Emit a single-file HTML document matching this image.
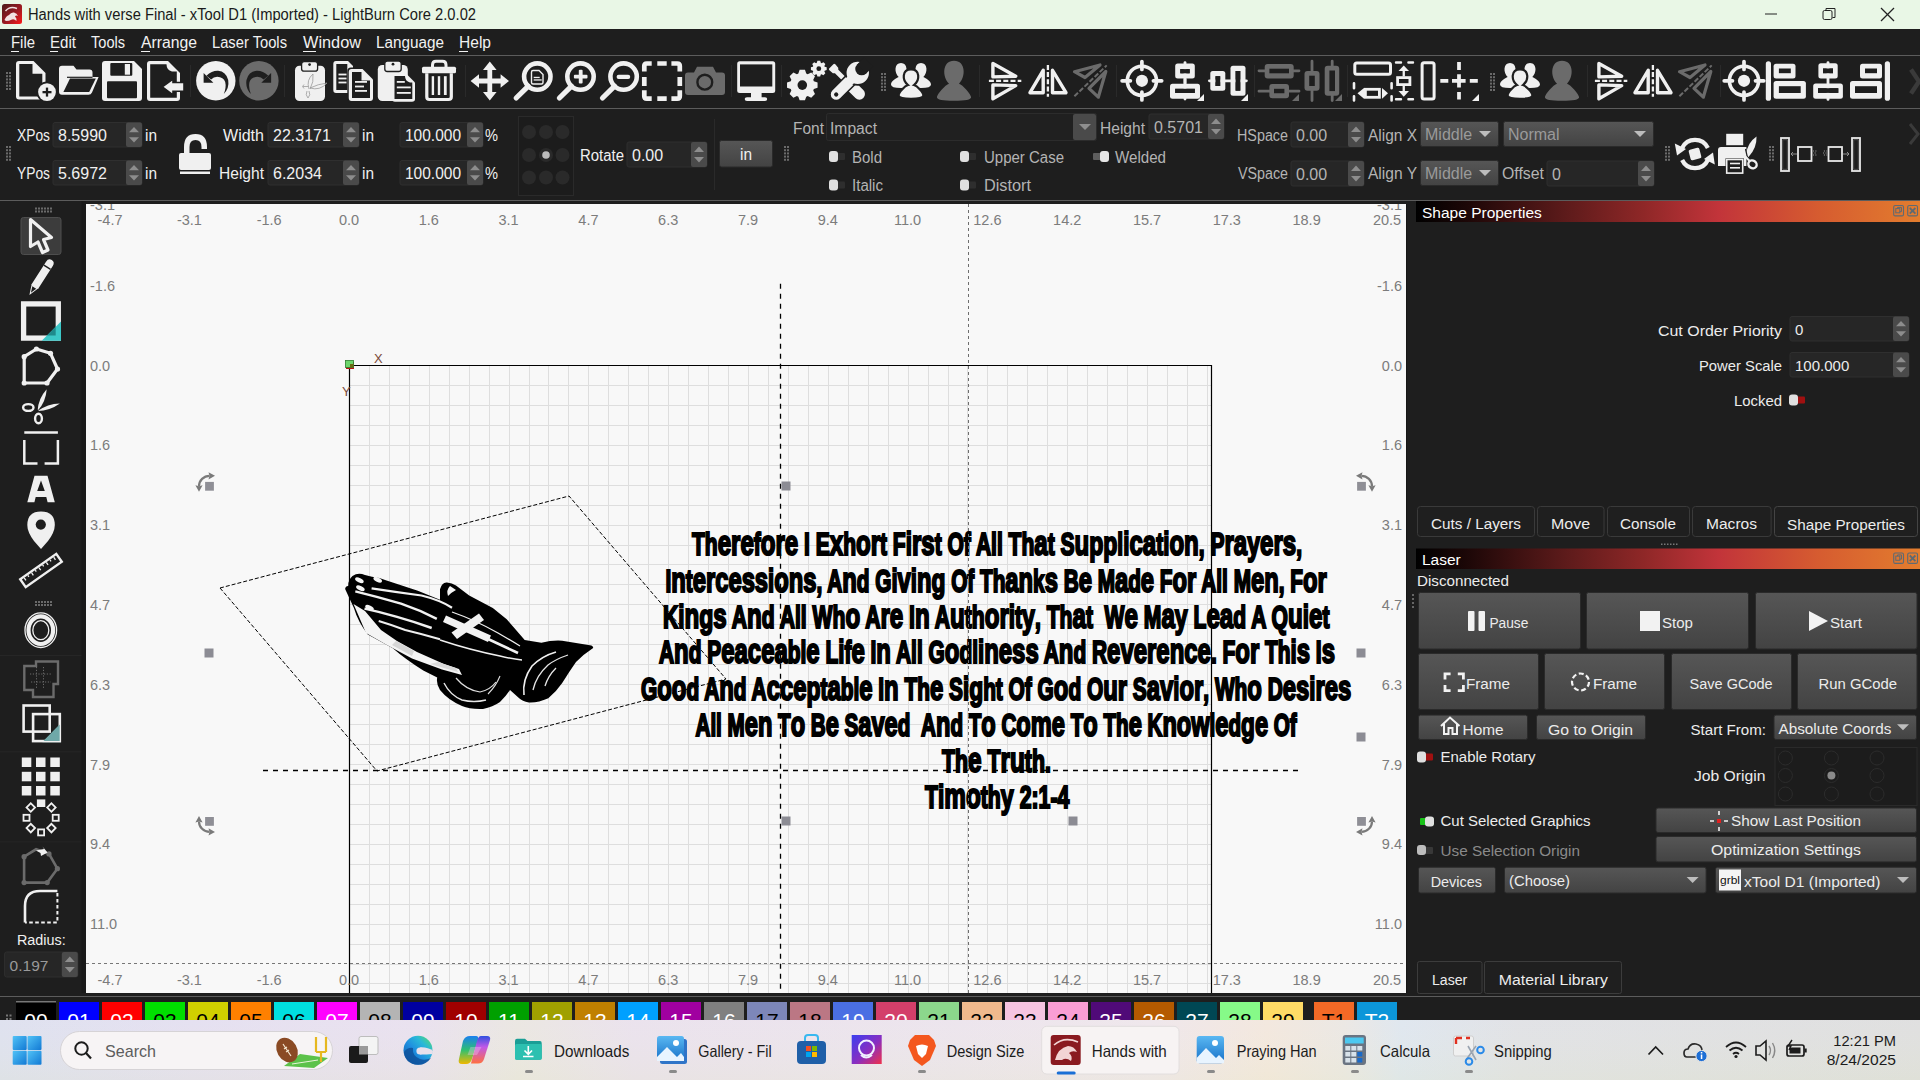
<!DOCTYPE html><html><head><meta charset="utf-8"><title>LightBurn</title><style>html,body{margin:0;padding:0;width:1920px;height:1080px;overflow:hidden;background:#1e1e1e}svg{display:block;font-family:"Liberation Sans",sans-serif}</style></head><body>
<svg width="1920" height="1080" viewBox="0 0 1920 1080">
<defs><linearGradient id="hdr" x1="0" x2="1" y1="0" y2="0"><stop offset="0" stop-color="#000"/><stop offset="0.1" stop-color="#1c0707"/><stop offset="0.3" stop-color="#5e1b1b"/><stop offset="0.45" stop-color="#8e2727"/><stop offset="0.6" stop-color="#c2343a"/><stop offset="0.8" stop-color="#d65c30"/><stop offset="1" stop-color="#e37d2e"/></linearGradient><linearGradient id="btn" x1="0" x2="0" y1="0" y2="1"><stop offset="0" stop-color="#565656"/><stop offset="1" stop-color="#434343"/></linearGradient><linearGradient id="tb" x1="0" x2="1" y1="0" y2="0"><stop offset="0" stop-color="#e3e3ec"/><stop offset="0.25" stop-color="#ebe3ee"/><stop offset="0.45" stop-color="#e9e4ea"/><stop offset="0.6" stop-color="#ede6e8"/><stop offset="0.7" stop-color="#f0e4d8"/><stop offset="0.76" stop-color="#dfe6ee"/><stop offset="1" stop-color="#e1e1e1"/></linearGradient></defs>
<rect x="0" y="0" width="1920" height="1080" fill="#1e1e1e"/>
<rect x="0" y="0" width="1920" height="29" fill="#e9f7e6"/>
<text x="28" y="20" font-size="16" fill="#1a1a1a" textLength="448" lengthAdjust="spacingAndGlyphs">Hands with verse Final - xTool D1 (Imported) - LightBurn Core 2.0.02</text>
<defs><linearGradient id="lbi" x1="0" x2="1" y1="0" y2="1"><stop offset="0" stop-color="#4a1a1a"/><stop offset="0.55" stop-color="#9a1a22"/><stop offset="1" stop-color="#ff1a1a"/></linearGradient></defs>
<rect x="2" y="4" width="20" height="20" fill="url(#lbi)" rx="2.5"/>
<path d="M5.5 11Q10 5.5 17 8.5" fill="none" stroke="#f0e0e0" stroke-width="1.4"/>
<path d="M4.5 20Q6 16 9 15Q11 12 14 12.5Q17 13 18 16Q16 15 15 16.5Q17 18 16.5 21Q14 18.5 12 19.5Q9 21 6 21Z" fill="#f2e2e2"/>
<line x1="1765" y1="14" x2="1777" y2="14" stroke="#222" stroke-width="1"/>
<rect x="1823" y="10.5" width="9" height="9" fill="none" stroke="#222" stroke-width="1" rx="1.5"/>
<path d="M1826 10.5 v-2 h9 v9 h-2.5" fill="none" stroke="#222" stroke-width="1"/>
<line x1="1881" y1="8" x2="1894" y2="21" stroke="#222" stroke-width="1.2"/>
<line x1="1894" y1="8" x2="1881" y2="21" stroke="#222" stroke-width="1.2"/>
<text x="11" y="48" font-size="16" fill="#f2f2f2" textLength="24" lengthAdjust="spacingAndGlyphs">File</text>
<text x="50" y="48" font-size="16" fill="#f2f2f2" textLength="26" lengthAdjust="spacingAndGlyphs">Edit</text>
<text x="91" y="48" font-size="16" fill="#f2f2f2" textLength="34" lengthAdjust="spacingAndGlyphs">Tools</text>
<text x="141" y="48" font-size="16" fill="#f2f2f2" textLength="56" lengthAdjust="spacingAndGlyphs">Arrange</text>
<text x="212" y="48" font-size="16" fill="#f2f2f2" textLength="75" lengthAdjust="spacingAndGlyphs">Laser Tools</text>
<text x="303" y="48" font-size="16" fill="#f2f2f2" textLength="58" lengthAdjust="spacingAndGlyphs">Window</text>
<text x="376" y="48" font-size="16" fill="#f2f2f2" textLength="68" lengthAdjust="spacingAndGlyphs">Language</text>
<text x="459" y="48" font-size="16" fill="#f2f2f2" textLength="32" lengthAdjust="spacingAndGlyphs">Help</text>
<line x1="11" y1="51.5" x2="19" y2="51.5" stroke="#f2f2f2" stroke-width="1"/>
<line x1="50" y1="51.5" x2="58" y2="51.5" stroke="#f2f2f2" stroke-width="1"/>
<line x1="141" y1="51.5" x2="150" y2="51.5" stroke="#f2f2f2" stroke-width="1"/>
<line x1="303" y1="51.5" x2="316" y2="51.5" stroke="#f2f2f2" stroke-width="1"/>
<line x1="459" y1="51.5" x2="468" y2="51.5" stroke="#f2f2f2" stroke-width="1"/>
<line x1="0" y1="55.5" x2="1920" y2="55.5" stroke="#5c5c5c" stroke-width="1"/>
<line x1="0" y1="108.5" x2="1920" y2="108.5" stroke="#5c5c5c" stroke-width="1"/>
<line x1="0" y1="200.5" x2="1920" y2="200.5" stroke="#5c5c5c" stroke-width="1"/>
<rect x="82" y="201" width="4" height="792" fill="#1a1a1a"/>
<rect x="86" y="204" width="1320" height="789" fill="#f8f8f8"/>
<svg x="86" y="204" width="1320" height="789" viewBox="86 204 1320 789" overflow="hidden">
<path d="M369.5 365V993M389.5 365V993M409.5 365V993M429.5 365V993M449.5 365V993M469.5 365V993M489.5 365V993M509.5 365V993M529.5 365V993M548.5 365V993M568.5 365V993M588.5 365V993M608.5 365V993M628.5 365V993M648.5 365V993M668.5 365V993M688.5 365V993M708.5 365V993M728.5 365V993M748.5 365V993M768.5 365V993M788.5 365V993M808.5 365V993M828.5 365V993M848.5 365V993M868.5 365V993M888.5 365V993M908.5 365V993M928.5 365V993M948.5 365V993M967.5 365V993M987.5 365V993M1007.5 365V993M1027.5 365V993M1047.5 365V993M1067.5 365V993M1087.5 365V993M1107.5 365V993M1127.5 365V993M1147.5 365V993M1167.5 365V993M1187.5 365V993M1207.5 365V993M349 385.5H1211M349 405.5H1211M349 425.5H1211M349 445.5H1211M349 465.5H1211M349 485.5H1211M349 505.5H1211M349 525.5H1211M349 545.5H1211M349 564.5H1211M349 584.5H1211M349 604.5H1211M349 624.5H1211M349 644.5H1211M349 664.5H1211M349 684.5H1211M349 704.5H1211M349 724.5H1211M349 744.5H1211M349 764.5H1211M349 784.5H1211M349 804.5H1211M349 824.5H1211M349 844.5H1211M349 864.5H1211M349 884.5H1211M349 904.5H1211M349 924.5H1211M349 944.5H1211M349 964.5H1211M349 983.5H1211" fill="none" stroke="#dedede" stroke-width="1"/>
<path d="M349.5 993V365.5H1211.5V993" fill="none" stroke="#000" stroke-width="1.2"/>
<text x="110" y="225" font-size="14.5" fill="#7c7c7c" text-anchor="middle">-4.7</text>
<text x="110" y="985" font-size="14.5" fill="#7c7c7c" text-anchor="middle">-4.7</text>
<text x="189.4" y="225" font-size="14.5" fill="#7c7c7c" text-anchor="middle">-3.1</text>
<text x="189.4" y="985" font-size="14.5" fill="#7c7c7c" text-anchor="middle">-3.1</text>
<text x="269.2" y="225" font-size="14.5" fill="#7c7c7c" text-anchor="middle">-1.6</text>
<text x="269.2" y="985" font-size="14.5" fill="#7c7c7c" text-anchor="middle">-1.6</text>
<text x="349.0" y="225" font-size="14.5" fill="#7c7c7c" text-anchor="middle">0.0</text>
<text x="349.0" y="985" font-size="14.5" fill="#7c7c7c" text-anchor="middle">0.0</text>
<text x="428.8" y="225" font-size="14.5" fill="#7c7c7c" text-anchor="middle">1.6</text>
<text x="428.8" y="985" font-size="14.5" fill="#7c7c7c" text-anchor="middle">1.6</text>
<text x="508.6" y="225" font-size="14.5" fill="#7c7c7c" text-anchor="middle">3.1</text>
<text x="508.6" y="985" font-size="14.5" fill="#7c7c7c" text-anchor="middle">3.1</text>
<text x="588.4" y="225" font-size="14.5" fill="#7c7c7c" text-anchor="middle">4.7</text>
<text x="588.4" y="985" font-size="14.5" fill="#7c7c7c" text-anchor="middle">4.7</text>
<text x="668.2" y="225" font-size="14.5" fill="#7c7c7c" text-anchor="middle">6.3</text>
<text x="668.2" y="985" font-size="14.5" fill="#7c7c7c" text-anchor="middle">6.3</text>
<text x="748.0" y="225" font-size="14.5" fill="#7c7c7c" text-anchor="middle">7.9</text>
<text x="748.0" y="985" font-size="14.5" fill="#7c7c7c" text-anchor="middle">7.9</text>
<text x="827.8" y="225" font-size="14.5" fill="#7c7c7c" text-anchor="middle">9.4</text>
<text x="827.8" y="985" font-size="14.5" fill="#7c7c7c" text-anchor="middle">9.4</text>
<text x="907.6" y="225" font-size="14.5" fill="#7c7c7c" text-anchor="middle">11.0</text>
<text x="907.6" y="985" font-size="14.5" fill="#7c7c7c" text-anchor="middle">11.0</text>
<text x="987.4" y="225" font-size="14.5" fill="#7c7c7c" text-anchor="middle">12.6</text>
<text x="987.4" y="985" font-size="14.5" fill="#7c7c7c" text-anchor="middle">12.6</text>
<text x="1067.2" y="225" font-size="14.5" fill="#7c7c7c" text-anchor="middle">14.2</text>
<text x="1067.2" y="985" font-size="14.5" fill="#7c7c7c" text-anchor="middle">14.2</text>
<text x="1147.0" y="225" font-size="14.5" fill="#7c7c7c" text-anchor="middle">15.7</text>
<text x="1147.0" y="985" font-size="14.5" fill="#7c7c7c" text-anchor="middle">15.7</text>
<text x="1226.8" y="225" font-size="14.5" fill="#7c7c7c" text-anchor="middle">17.3</text>
<text x="1226.8" y="985" font-size="14.5" fill="#7c7c7c" text-anchor="middle">17.3</text>
<text x="1306.6" y="225" font-size="14.5" fill="#7c7c7c" text-anchor="middle">18.9</text>
<text x="1306.6" y="985" font-size="14.5" fill="#7c7c7c" text-anchor="middle">18.9</text>
<text x="1387" y="225" font-size="14.5" fill="#7c7c7c" text-anchor="middle">20.5</text>
<text x="1387" y="985" font-size="14.5" fill="#7c7c7c" text-anchor="middle">20.5</text>
<text x="90" y="210" font-size="14.5" fill="#7c7c7c">-3.1</text>
<text x="1402" y="210" font-size="14.5" fill="#7c7c7c" text-anchor="end">-3.1</text>
<text x="90" y="290.7" font-size="14.5" fill="#7c7c7c">-1.6</text>
<text x="1402" y="290.7" font-size="14.5" fill="#7c7c7c" text-anchor="end">-1.6</text>
<text x="90" y="370.5" font-size="14.5" fill="#7c7c7c">0.0</text>
<text x="1402" y="370.5" font-size="14.5" fill="#7c7c7c" text-anchor="end">0.0</text>
<text x="90" y="450.3" font-size="14.5" fill="#7c7c7c">1.6</text>
<text x="1402" y="450.3" font-size="14.5" fill="#7c7c7c" text-anchor="end">1.6</text>
<text x="90" y="530.1" font-size="14.5" fill="#7c7c7c">3.1</text>
<text x="1402" y="530.1" font-size="14.5" fill="#7c7c7c" text-anchor="end">3.1</text>
<text x="90" y="609.9" font-size="14.5" fill="#7c7c7c">4.7</text>
<text x="1402" y="609.9" font-size="14.5" fill="#7c7c7c" text-anchor="end">4.7</text>
<text x="90" y="689.7" font-size="14.5" fill="#7c7c7c">6.3</text>
<text x="1402" y="689.7" font-size="14.5" fill="#7c7c7c" text-anchor="end">6.3</text>
<text x="90" y="769.5" font-size="14.5" fill="#7c7c7c">7.9</text>
<text x="1402" y="769.5" font-size="14.5" fill="#7c7c7c" text-anchor="end">7.9</text>
<text x="90" y="849.3" font-size="14.5" fill="#7c7c7c">9.4</text>
<text x="1402" y="849.3" font-size="14.5" fill="#7c7c7c" text-anchor="end">9.4</text>
<text x="90" y="929.1" font-size="14.5" fill="#7c7c7c">11.0</text>
<text x="1402" y="929.1" font-size="14.5" fill="#7c7c7c" text-anchor="end">11.0</text>
<line x1="86" y1="963.5" x2="1406" y2="963.5" stroke="#777" stroke-width="1" stroke-dasharray="3 3"/>
<line x1="780.5" y1="283.8" x2="780.5" y2="993" stroke="#000" stroke-width="1.3" stroke-dasharray="5 5"/>
<line x1="263" y1="770.5" x2="1298" y2="770.5" stroke="#000" stroke-width="1.3" stroke-dasharray="5 5"/>
<rect x="346" y="362" width="8" height="7" fill="#bb1111"/>
<rect x="345.5" y="360.5" width="8" height="7" fill="#6cd66c" stroke="#2e7a2e" stroke-width="0.8"/>
<rect x="350" y="364" width="3.5" height="3.5" fill="#6b6b10"/>
<text x="374" y="363" font-size="13" fill="#7a4a3a">X</text>
<text x="342" y="396" font-size="13" fill="#7a4a3a">Y</text>
<path d="M220 588L569 496L726 679L377 771Z" fill="none" stroke="#000" stroke-width="1" stroke-dasharray="4 2"/>
<g>
<path d="M352.5 576Q358 572 365 575L372 576.8Q380 577.5 385.8 580.3L417.8 590.7L440 599.7L440 589.3Q442 582 447 582.5Q452 583 456 585.5L469.2 595.6L492.8 608L506.7 619.2L524.7 640L541.4 642.8Q552 640 562.2 640.7L591.4 645.6Q594 647 592.8 648.3Q584 654 576 662Q569 672 562.2 683Q556 692 548.3 698.3Q538 703 528.9 702.5Q522 701 519.2 698.3L510 690Q506 696 500 702Q492.8 707 483 709Q470 709.5 462 706Q448 700 440 690Q436 684 437.2 677.5L423.3 670.6Q405 659 392.8 648.3L367.8 634.4Q358 622 353.9 608L345.6 590Q344 587 348.3 585.8Q348 580 352.5 576Z" fill="#000"/>
<path d="M353.5 604L366 633L386 644.5L412 658.5L442 669.5L462 675L459 669L444 664L417 652L397 641L381 630L365 611Z" fill="#f4f4f4"/>
<path d="M392 645L412 656L414 651L396 641Z" fill="#d6d6d6"/>
<path d="M430 664L458 672L456 668L438 662Z" fill="#dadada"/>
<path d="M371.6 588.3Q396 592 421.5 595.5Q440 600 452 607.7" fill="none" stroke="#f2f2f2" stroke-width="2.2"/>
<path d="M355.3 591.4Q378 597 401 603.6Q420 610 436.8 618.9" fill="none" stroke="#f2f2f2" stroke-width="2.4"/>
<path d="M364.5 608.7Q380 612 397 616.9Q415 622 431.7 628" fill="none" stroke="#f0f0f0" stroke-width="2.4"/>
<path d="M378.7 621Q392 625 405.2 630Q422 634 440 639.3" fill="none" stroke="#eeeeee" stroke-width="2"/>
<path d="M452 612Q475 620 498 633Q510 640 520 646" fill="none" stroke="#f0f0f0" stroke-width="1.3"/>
<path d="M440 640Q470 650 500 656Q512 659 522 660" fill="none" stroke="#f0f0f0" stroke-width="1.4"/>
<ellipse cx="359.4" cy="580.2" rx="4.6" ry="2.2" fill="#f4f4f4" transform="rotate(25 359.4 580.2)"/>
<ellipse cx="377.7" cy="579.7" rx="4.6" ry="2.2" fill="#f4f4f4" transform="rotate(25 377.7 579.7)"/>
<ellipse cx="360.4" cy="588.3" rx="4.6" ry="2.2" fill="#f4f4f4" transform="rotate(25 360.4 588.3)"/>
<ellipse cx="369.5" cy="607.7" rx="4.6" ry="2.2" fill="#f4f4f4" transform="rotate(25 369.5 607.7)"/>
<path d="M450 586Q446 590 448 596Q452 592 456 590Z" fill="#f4f4f4"/>
<path d="M446 615.5L491 635.5L488 642L443 622Z" fill="#f2f2f2"/>
<path d="M488 639L518 653" fill="none" stroke="#f2f2f2" stroke-width="2.6"/>
<path d="M451.5 632.5L479 613.5L484 620L457 639Z" fill="#f2f2f2"/>
<path d="M524 695Q522 680 532 666Q542 656 556 652" fill="none" stroke="#f0f0f0" stroke-width="1.6"/>
<path d="M533 690Q536 676 548 665Q556 659 568 655" fill="none" stroke="#e6e6e6" stroke-width="1.3"/>
<path d="M545 686Q548 676 556 668" fill="none" stroke="#e6e6e6" stroke-width="1.3"/>
<path d="M444 683Q450 695 462 700Q474 703 486 700" fill="none" stroke="#e6e6e6" stroke-width="1.4"/>
<path d="M456 678Q466 690 480 692Q490 690 496 682" fill="none" stroke="#dedede" stroke-width="1.2"/>
<path d="M488 694Q496 686 500 676" fill="none" stroke="#e0e0e0" stroke-width="1.1"/>
</g>
<text x="692" y="555.15" font-size="31" font-weight="bold" fill="#000" stroke="#000" stroke-width="2.1" textLength="610" lengthAdjust="spacingAndGlyphs" xml:space="preserve"><tspan font-size="31">Th</tspan><tspan font-size="35.5">ere</tspan><tspan font-size="31">f</tspan><tspan font-size="35.5">ore</tspan><tspan font-size="31"> I E</tspan><tspan font-size="35.5">x</tspan><tspan font-size="31">h</tspan><tspan font-size="35.5">or</tspan><tspan font-size="31">t F</tspan><tspan font-size="33">i</tspan><tspan font-size="35.5">rs</tspan><tspan font-size="31">t Of All Th</tspan><tspan font-size="35.5">a</tspan><tspan font-size="31">t S</tspan><tspan font-size="35.5">u</tspan><tspan font-size="34">pp</tspan><tspan font-size="31">l</tspan><tspan font-size="33">i</tspan><tspan font-size="35.5">ca</tspan><tspan font-size="31">t</tspan><tspan font-size="33">i</tspan><tspan font-size="35.5">on</tspan><tspan font-size="31">, P</tspan><tspan font-size="35.5">ra</tspan><tspan font-size="34">y</tspan><tspan font-size="35.5">ers</tspan><tspan font-size="31">,</tspan></text>
<text x="665.5" y="592.05" font-size="31" font-weight="bold" fill="#000" stroke="#000" stroke-width="2.1" textLength="661.2" lengthAdjust="spacingAndGlyphs" xml:space="preserve"><tspan font-size="31">I</tspan><tspan font-size="35.5">n</tspan><tspan font-size="31">t</tspan><tspan font-size="35.5">ercess</tspan><tspan font-size="33">i</tspan><tspan font-size="35.5">ons</tspan><tspan font-size="31">, A</tspan><tspan font-size="35.5">n</tspan><tspan font-size="31">d G</tspan><tspan font-size="33">i</tspan><tspan font-size="35.5">v</tspan><tspan font-size="33">i</tspan><tspan font-size="35.5">n</tspan><tspan font-size="34">g</tspan><tspan font-size="31"> Of Th</tspan><tspan font-size="35.5">an</tspan><tspan font-size="31">k</tspan><tspan font-size="35.5">s</tspan><tspan font-size="31"> B</tspan><tspan font-size="35.5">e</tspan><tspan font-size="31"> M</tspan><tspan font-size="35.5">a</tspan><tspan font-size="31">d</tspan><tspan font-size="35.5">e</tspan><tspan font-size="31"> F</tspan><tspan font-size="35.5">or</tspan><tspan font-size="31"> All M</tspan><tspan font-size="35.5">en</tspan><tspan font-size="31">, F</tspan><tspan font-size="35.5">or</tspan></text>
<text x="663" y="627.65" font-size="31" font-weight="bold" fill="#000" stroke="#000" stroke-width="2.1" textLength="666.4" lengthAdjust="spacingAndGlyphs" xml:space="preserve"><tspan font-size="31">K</tspan><tspan font-size="33">i</tspan><tspan font-size="35.5">n</tspan><tspan font-size="34">g</tspan><tspan font-size="35.5">s</tspan><tspan font-size="31"> A</tspan><tspan font-size="35.5">n</tspan><tspan font-size="31">d All Wh</tspan><tspan font-size="35.5">o</tspan><tspan font-size="31"> A</tspan><tspan font-size="35.5">re</tspan><tspan font-size="31"> I</tspan><tspan font-size="35.5">n</tspan><tspan font-size="31"> A</tspan><tspan font-size="35.5">u</tspan><tspan font-size="31">th</tspan><tspan font-size="35.5">or</tspan><tspan font-size="33">i</tspan><tspan font-size="31">t</tspan><tspan font-size="34">y</tspan><tspan font-size="31">, Th</tspan><tspan font-size="35.5">a</tspan><tspan font-size="31">t  W</tspan><tspan font-size="35.5">e</tspan><tspan font-size="31"> M</tspan><tspan font-size="35.5">a</tspan><tspan font-size="34">y</tspan><tspan font-size="31"> L</tspan><tspan font-size="35.5">ea</tspan><tspan font-size="31">d A Q</tspan><tspan font-size="35.5">u</tspan><tspan font-size="33">i</tspan><tspan font-size="35.5">e</tspan><tspan font-size="31">t</tspan></text>
<text x="659" y="663.15" font-size="31" font-weight="bold" fill="#000" stroke="#000" stroke-width="2.1" textLength="676" lengthAdjust="spacingAndGlyphs" xml:space="preserve"><tspan font-size="31">A</tspan><tspan font-size="35.5">n</tspan><tspan font-size="31">d P</tspan><tspan font-size="35.5">eacea</tspan><tspan font-size="31">bl</tspan><tspan font-size="35.5">e</tspan><tspan font-size="31"> L</tspan><tspan font-size="33">i</tspan><tspan font-size="31">f</tspan><tspan font-size="35.5">e</tspan><tspan font-size="31"> I</tspan><tspan font-size="35.5">n</tspan><tspan font-size="31"> All G</tspan><tspan font-size="35.5">o</tspan><tspan font-size="31">dl</tspan><tspan font-size="33">i</tspan><tspan font-size="35.5">ness</tspan><tspan font-size="31"> A</tspan><tspan font-size="35.5">n</tspan><tspan font-size="31">d R</tspan><tspan font-size="35.5">everence</tspan><tspan font-size="31">. F</tspan><tspan font-size="35.5">or</tspan><tspan font-size="31"> Th</tspan><tspan font-size="33">i</tspan><tspan font-size="35.5">s</tspan><tspan font-size="31"> I</tspan><tspan font-size="35.5">s</tspan></text>
<text x="641" y="699.85" font-size="31" font-weight="bold" fill="#000" stroke="#000" stroke-width="2.1" textLength="710.4" lengthAdjust="spacingAndGlyphs" xml:space="preserve"><tspan font-size="31">G</tspan><tspan font-size="35.5">oo</tspan><tspan font-size="31">d A</tspan><tspan font-size="35.5">n</tspan><tspan font-size="31">d A</tspan><tspan font-size="35.5">cce</tspan><tspan font-size="34">p</tspan><tspan font-size="31">t</tspan><tspan font-size="35.5">a</tspan><tspan font-size="31">bl</tspan><tspan font-size="35.5">e</tspan><tspan font-size="31"> I</tspan><tspan font-size="35.5">n</tspan><tspan font-size="31"> Th</tspan><tspan font-size="35.5">e</tspan><tspan font-size="31"> S</tspan><tspan font-size="33">i</tspan><tspan font-size="34">g</tspan><tspan font-size="31">ht Of G</tspan><tspan font-size="35.5">o</tspan><tspan font-size="31">d O</tspan><tspan font-size="35.5">ur</tspan><tspan font-size="31"> S</tspan><tspan font-size="35.5">av</tspan><tspan font-size="33">i</tspan><tspan font-size="35.5">or</tspan><tspan font-size="31">, Wh</tspan><tspan font-size="35.5">o</tspan><tspan font-size="31"> D</tspan><tspan font-size="35.5">es</tspan><tspan font-size="33">i</tspan><tspan font-size="35.5">res</tspan></text>
<text x="695.5" y="735.75" font-size="31" font-weight="bold" fill="#000" stroke="#000" stroke-width="2.1" textLength="601.2" lengthAdjust="spacingAndGlyphs" xml:space="preserve"><tspan font-size="31">All M</tspan><tspan font-size="35.5">en</tspan><tspan font-size="31"> T</tspan><tspan font-size="35.5">o</tspan><tspan font-size="31"> B</tspan><tspan font-size="35.5">e</tspan><tspan font-size="31"> S</tspan><tspan font-size="35.5">ave</tspan><tspan font-size="31">d  A</tspan><tspan font-size="35.5">n</tspan><tspan font-size="31">d T</tspan><tspan font-size="35.5">o</tspan><tspan font-size="31"> C</tspan><tspan font-size="35.5">ome</tspan><tspan font-size="31"> T</tspan><tspan font-size="35.5">o</tspan><tspan font-size="31"> Th</tspan><tspan font-size="35.5">e</tspan><tspan font-size="31"> K</tspan><tspan font-size="35.5">now</tspan><tspan font-size="31">l</tspan><tspan font-size="35.5">e</tspan><tspan font-size="31">d</tspan><tspan font-size="34">g</tspan><tspan font-size="35.5">e</tspan><tspan font-size="31"> Of</tspan></text>
<text x="942" y="772.05" font-size="31" font-weight="bold" fill="#000" stroke="#000" stroke-width="2.1" textLength="108.8" lengthAdjust="spacingAndGlyphs" xml:space="preserve"><tspan font-size="31">Th</tspan><tspan font-size="35.5">e</tspan><tspan font-size="31"> T</tspan><tspan font-size="35.5">ru</tspan><tspan font-size="31">th.</tspan></text>
<text x="925" y="808.0" font-size="31" font-weight="bold" fill="#000" stroke="#000" stroke-width="2.1" textLength="144.3" lengthAdjust="spacingAndGlyphs" xml:space="preserve"><tspan font-size="31">T</tspan><tspan font-size="33">i</tspan><tspan font-size="35.5">mo</tspan><tspan font-size="31">th</tspan><tspan font-size="34">y</tspan><tspan font-size="31"> 2:1-4</tspan></text>
<line x1="968.5" y1="204" x2="968.5" y2="993" stroke="#6e6e6e" stroke-width="1" stroke-dasharray="3 3"/>
<rect x="781.5" y="481.5" width="9" height="9" fill="#8c8c94"/>
<rect x="204.5" y="648.5" width="9" height="9" fill="#8c8c94"/>
<rect x="1356.5" y="648.5" width="9" height="9" fill="#8c8c94"/>
<rect x="1356.5" y="732.5" width="9" height="9" fill="#8c8c94"/>
<rect x="781.5" y="816.5" width="9" height="9" fill="#8c8c94"/>
<rect x="1068.5" y="816.5" width="9" height="9" fill="#8c8c94"/>
<rect x="204.5" y="481.3" width="10" height="10" fill="#fafafa"/>
<rect x="205.1" y="481.90000000000003" width="8.8" height="8.8" fill="#8f8f96"/>
<path d="M199.00 486.30A10.5 10.5 0 0 1 209.50 475.80" fill="none" stroke="#7a7a7a" stroke-width="2.2"/>
<path d="M215.00 475.80L208.50 472.20L209.50 475.80L208.50 479.40Z" fill="#7a7a7a"/>
<path d="M199.00 491.80L195.40 485.30L199.00 486.30L202.60 485.30Z" fill="#7a7a7a"/>
<rect x="1356.5" y="481.3" width="10" height="10" fill="#fafafa"/>
<rect x="1357.1" y="481.90000000000003" width="8.8" height="8.8" fill="#8f8f96"/>
<path d="M1361.50 475.80A10.5 10.5 0 0 1 1372.00 486.30" fill="none" stroke="#7a7a7a" stroke-width="2.2"/>
<path d="M1372.00 491.80L1375.60 485.30L1372.00 486.30L1368.40 485.30Z" fill="#7a7a7a"/>
<path d="M1356.00 475.80L1362.50 472.20L1361.50 475.80L1362.50 479.40Z" fill="#7a7a7a"/>
<rect x="204.5" y="816.4" width="10" height="10" fill="#fafafa"/>
<rect x="205.1" y="817.0" width="8.8" height="8.8" fill="#8f8f96"/>
<path d="M209.50 831.90A10.5 10.5 0 0 1 199.00 821.40" fill="none" stroke="#7a7a7a" stroke-width="2.2"/>
<path d="M199.00 815.90L195.40 822.40L199.00 821.40L202.60 822.40Z" fill="#7a7a7a"/>
<path d="M215.00 831.90L208.50 835.50L209.50 831.90L208.50 828.30Z" fill="#7a7a7a"/>
<rect x="1356.5" y="816.4" width="10" height="10" fill="#fafafa"/>
<rect x="1357.1" y="817.0" width="8.8" height="8.8" fill="#8f8f96"/>
<path d="M1372.00 821.40A10.5 10.5 0 0 1 1361.50 831.90" fill="none" stroke="#7a7a7a" stroke-width="2.2"/>
<path d="M1356.00 831.90L1362.50 835.50L1361.50 831.90L1362.50 828.30Z" fill="#7a7a7a"/>
<path d="M1372.00 815.90L1375.60 822.40L1372.00 821.40L1368.40 822.40Z" fill="#7a7a7a"/>
</svg>
<rect x="1416" y="201" width="504" height="21" fill="url(#hdr)"/>
<text x="1422" y="218" font-size="15.5" fill="#ffffff">Shape Properties</text>
<rect x="1893.7" y="205.5" width="9.8" height="10.4" fill="none" stroke="#5e6a72" stroke-width="1.1" rx="1.5"/>
<rect x="1895.8" y="208.6" width="4" height="4.2" fill="none" stroke="#5e6a72" stroke-width="1"/>
<path d="M1897.5 208.6V207.4H1901.5V211.6H1899.8" fill="none" stroke="#5e6a72" stroke-width="1"/>
<rect x="1907.7" y="205.5" width="9.8" height="10.4" fill="none" stroke="#5e6a72" stroke-width="1.1" rx="1.5"/>
<line x1="1909.8" y1="208" x2="1915.4" y2="213.6" stroke="#5e6a72" stroke-width="1.8"/>
<line x1="1915.4" y1="208" x2="1909.8" y2="213.6" stroke="#5e6a72" stroke-width="1.8"/>
<text x="1782" y="335.6" font-size="15.5" fill="#ececec" textLength="124" lengthAdjust="spacingAndGlyphs" text-anchor="end">Cut Order Priority</text>
<rect x="1790" y="316.5" width="119" height="24.5" fill="#262626" stroke="#2f2f2f" stroke-width="1" rx="2"/>
<rect x="1893" y="316.5" width="16" height="24.5" fill="#4a4a4a" rx="2"/>
<path d="M1896.0 326.3L1901.0 320.91L1906.0 326.3Z" fill="#8d8d8d"/>
<path d="M1896.0 331.2L1901.0 336.59L1906.0 331.2Z" fill="#8d8d8d"/>
<text x="1795" y="335.05" font-size="15" fill="#ececec">0</text>
<text x="1782" y="371.4" font-size="15.5" fill="#ececec" textLength="83" lengthAdjust="spacingAndGlyphs" text-anchor="end">Power Scale</text>
<rect x="1790" y="352.5" width="119" height="24.5" fill="#262626" stroke="#2f2f2f" stroke-width="1" rx="2"/>
<rect x="1893" y="352.5" width="16" height="24.5" fill="#4a4a4a" rx="2"/>
<path d="M1896.0 362.3L1901.0 356.91L1906.0 362.3Z" fill="#8d8d8d"/>
<path d="M1896.0 367.2L1901.0 372.59L1906.0 367.2Z" fill="#8d8d8d"/>
<text x="1795" y="371.05" font-size="15" fill="#ececec">100.000</text>
<text x="1782" y="406" font-size="15.5" fill="#ececec" textLength="48" lengthAdjust="spacingAndGlyphs" text-anchor="end">Locked</text>
<rect x="1791" y="396.5" width="14" height="7" fill="#a01010" rx="1"/>
<rect x="1789" y="394.5" width="9" height="11" fill="#e0e0e0" rx="3"/>
<rect x="1417.5" y="506.5" width="117" height="30" fill="#1f1f1f" stroke="#3a3a3a" stroke-width="1" rx="3"/>
<text x="1431" y="529" font-size="15.5" fill="#ececec" textLength="90" lengthAdjust="spacingAndGlyphs">Cuts / Layers</text>
<rect x="1537.5" y="506.5" width="66.5" height="30" fill="#1f1f1f" stroke="#3a3a3a" stroke-width="1" rx="3"/>
<text x="1551" y="529" font-size="15.5" fill="#ececec" textLength="39" lengthAdjust="spacingAndGlyphs">Move</text>
<rect x="1607.5" y="506.5" width="82" height="30" fill="#1f1f1f" stroke="#3a3a3a" stroke-width="1" rx="3"/>
<text x="1620" y="529" font-size="15.5" fill="#ececec" textLength="56" lengthAdjust="spacingAndGlyphs">Console</text>
<rect x="1692.5" y="506.5" width="78.59999999999991" height="30" fill="#1f1f1f" stroke="#3a3a3a" stroke-width="1" rx="3"/>
<text x="1706" y="529" font-size="15.5" fill="#ececec" textLength="51" lengthAdjust="spacingAndGlyphs">Macros</text>
<rect x="1774.5" y="506.5" width="143" height="30" fill="#1f1f1f" stroke="#444" stroke-width="1" rx="3"/>
<text x="1787" y="530" font-size="15.5" fill="#ececec" textLength="118" lengthAdjust="spacingAndGlyphs">Shape Properties</text>
<rect x="1661" y="543.5" width="1.5" height="1.5" fill="#777"/>
<rect x="1664" y="543.5" width="1.5" height="1.5" fill="#777"/>
<rect x="1667" y="543.5" width="1.5" height="1.5" fill="#777"/>
<rect x="1670" y="543.5" width="1.5" height="1.5" fill="#777"/>
<rect x="1673" y="543.5" width="1.5" height="1.5" fill="#777"/>
<rect x="1676" y="543.5" width="1.5" height="1.5" fill="#777"/>
<rect x="1416" y="548.5" width="504" height="20.5" fill="url(#hdr)"/>
<text x="1422" y="565" font-size="15.5" fill="#ffffff">Laser</text>
<rect x="1893.7" y="553.0" width="9.8" height="10.4" fill="none" stroke="#5e6a72" stroke-width="1.1" rx="1.5"/>
<rect x="1895.8" y="556.1" width="4" height="4.2" fill="none" stroke="#5e6a72" stroke-width="1"/>
<path d="M1897.5 556.1V554.9H1901.5V559.1H1899.8" fill="none" stroke="#5e6a72" stroke-width="1"/>
<rect x="1907.7" y="553.0" width="9.8" height="10.4" fill="none" stroke="#5e6a72" stroke-width="1.1" rx="1.5"/>
<line x1="1909.8" y1="555.5" x2="1915.4" y2="561.1" stroke="#5e6a72" stroke-width="1.8"/>
<line x1="1915.4" y1="555.5" x2="1909.8" y2="561.1" stroke="#5e6a72" stroke-width="1.8"/>
<text x="1417" y="586" font-size="15.5" fill="#ececec" textLength="92" lengthAdjust="spacingAndGlyphs">Disconnected</text>
<rect x="1412" y="594" width="2" height="2" fill="#666"/>
<rect x="1412" y="598" width="2" height="2" fill="#666"/>
<rect x="1412" y="602" width="2" height="2" fill="#666"/>
<rect x="1412" y="606" width="2" height="2" fill="#666"/>
<rect x="1418.5" y="592.5" width="162" height="56.5" fill="url(#btn)" stroke="#2a2a2a" stroke-width="1" rx="2"/>
<rect x="1586.5" y="592.5" width="162" height="56.5" fill="url(#btn)" stroke="#2a2a2a" stroke-width="1" rx="2"/>
<rect x="1755.5" y="592.5" width="161.5" height="56.5" fill="url(#btn)" stroke="#2a2a2a" stroke-width="1" rx="2"/>
<rect x="1468" y="611" width="6.5" height="20" fill="#f2f2f2" rx="1"/>
<rect x="1478.5" y="611" width="6.5" height="20" fill="#f2f2f2" rx="1"/>
<text x="1489.4" y="628" font-size="15.5" fill="#ececec" textLength="39" lengthAdjust="spacingAndGlyphs">Pause</text>
<rect x="1640" y="611" width="20" height="20" fill="#f2f2f2"/>
<text x="1662" y="628" font-size="15.5" fill="#ececec" textLength="31" lengthAdjust="spacingAndGlyphs">Stop</text>
<path d="M1809 611L1828 621L1809 631Z" fill="#f2f2f2"/>
<text x="1830" y="628" font-size="15.5" fill="#ececec" textLength="32" lengthAdjust="spacingAndGlyphs">Start</text>
<rect x="1418.5" y="653.5" width="120" height="56" fill="url(#btn)" stroke="#2a2a2a" stroke-width="1" rx="2"/>
<rect x="1544.5" y="653.5" width="120" height="56" fill="url(#btn)" stroke="#2a2a2a" stroke-width="1" rx="2"/>
<rect x="1671.5" y="653.5" width="120" height="56" fill="url(#btn)" stroke="#2a2a2a" stroke-width="1" rx="2"/>
<rect x="1797.5" y="653.5" width="119.5" height="56" fill="url(#btn)" stroke="#2a2a2a" stroke-width="1" rx="2"/>
<path d="M1445 679.5v-5.6h5.6 M1457.8 673.9h5.6v5.6 M1463.4 685v5.6h-5.6 M1450.6 690.6h-5.6v-5.6" fill="none" stroke="#f2f2f2" stroke-width="2.8"/>
<text x="1466" y="689" font-size="15.5" fill="#ececec" textLength="44" lengthAdjust="spacingAndGlyphs">Frame</text>
<circle cx="1580.5" cy="682" r="8.5" fill="none" stroke="#f2f2f2" stroke-width="2.2" stroke-dasharray="5 2.6"/>
<text x="1593" y="689" font-size="15.5" fill="#ececec" textLength="44" lengthAdjust="spacingAndGlyphs">Frame</text>
<text x="1689.6" y="689" font-size="15.5" fill="#ececec" textLength="83" lengthAdjust="spacingAndGlyphs">Save GCode</text>
<text x="1818.6" y="689" font-size="15.5" fill="#ececec" textLength="78.5" lengthAdjust="spacingAndGlyphs">Run GCode</text>
<rect x="1418.5" y="715.1" width="109" height="24.399999999999977" fill="url(#btn)" stroke="#2a2a2a" stroke-width="1" rx="2"/>
<path d="M1441 726L1450 717.5L1459.5 726M1444 724v10h4.5v-6h4v6h4.5v-10" fill="none" stroke="#f2f2f2" stroke-width="2"/>
<text x="1462.6" y="735" font-size="15.5" fill="#ececec" textLength="41" lengthAdjust="spacingAndGlyphs">Home</text>
<rect x="1536.5" y="715.1" width="109" height="24.399999999999977" fill="url(#btn)" stroke="#2a2a2a" stroke-width="1" rx="2"/>
<text x="1548" y="735" font-size="15.5" fill="#ececec" textLength="85" lengthAdjust="spacingAndGlyphs">Go to Origin</text>
<text x="1690.5" y="735" font-size="15.5" fill="#ececec" textLength="75.5" lengthAdjust="spacingAndGlyphs">Start From:</text>
<rect x="1774.0" y="715.1" width="142.5" height="24.399999999999977" fill="url(#btn)" stroke="#2a2a2a" stroke-width="1" rx="2"/>
<text x="1778.5" y="733.5999999999999" font-size="15.5" fill="#ececec" textLength="113" lengthAdjust="spacingAndGlyphs">Absolute Coords</text>
<path d="M1897 724.3L1909 724.3L1903 730.3Z" fill="#bdbdbd"/>
<rect x="1419" y="753.5" width="14" height="7" fill="#a01010" rx="1"/>
<rect x="1417" y="751.5" width="9" height="11" fill="#e0e0e0" rx="3"/>
<text x="1440.5" y="762.3" font-size="15.5" fill="#ececec" textLength="95" lengthAdjust="spacingAndGlyphs">Enable Rotary</text>
<text x="1765.4" y="780.6" font-size="15.5" fill="#ececec" textLength="71.5" lengthAdjust="spacingAndGlyphs" text-anchor="end">Job Origin</text>
<rect x="1775" y="747.5" width="142" height="58" fill="#1c1c1c" stroke="#2a2a2a" stroke-width="1"/>
<circle cx="1785.4" cy="758" r="7" fill="#1c1c1c" stroke="#2c2c2c" stroke-width="1"/>
<circle cx="1785.4" cy="775.5" r="7" fill="#1c1c1c" stroke="#2c2c2c" stroke-width="1"/>
<circle cx="1785.4" cy="794" r="7" fill="#1c1c1c" stroke="#2c2c2c" stroke-width="1"/>
<circle cx="1831.4" cy="758" r="7" fill="#1c1c1c" stroke="#2c2c2c" stroke-width="1"/>
<circle cx="1831.4" cy="775.5" r="7" fill="#1c1c1c" stroke="#2c2c2c" stroke-width="1"/>
<circle cx="1831.4" cy="794" r="7" fill="#1c1c1c" stroke="#2c2c2c" stroke-width="1"/>
<circle cx="1877" cy="758" r="7" fill="#1c1c1c" stroke="#2c2c2c" stroke-width="1"/>
<circle cx="1877" cy="775.5" r="7" fill="#1c1c1c" stroke="#2c2c2c" stroke-width="1"/>
<circle cx="1877" cy="794" r="7" fill="#1c1c1c" stroke="#2c2c2c" stroke-width="1"/>
<circle cx="1831.4" cy="775.5" r="4" fill="#8a8a8a"/>
<rect x="1420" y="818" width="14" height="7" fill="#19c219" rx="1"/>
<rect x="1425" y="816.5" width="9" height="10" fill="#e0e0e0" rx="3"/>
<text x="1440.5" y="826" font-size="15.5" fill="#ececec" textLength="150" lengthAdjust="spacingAndGlyphs">Cut Selected Graphics</text>
<rect x="1656.0" y="808.0" width="260.5" height="24.5" fill="url(#btn)" stroke="#2a2a2a" stroke-width="1" rx="2"/>
<path d="M1719 811v4M1719 827v4M1710 821h4M1724 821h4" fill="none" stroke="#f2f2f2" stroke-width="1.6"/>
<rect x="1717" y="819" width="4" height="4" fill="#e02020"/>
<text x="1731" y="826" font-size="15.5" fill="#ececec" textLength="130" lengthAdjust="spacingAndGlyphs">Show Last Position</text>
<rect x="1419" y="847" width="14" height="7" fill="#383838" rx="1"/>
<rect x="1417" y="845" width="9" height="10" fill="#bdbdbd" rx="3"/>
<text x="1440.5" y="856" font-size="15.5" fill="#8a8a8a" textLength="139.5" lengthAdjust="spacingAndGlyphs">Use Selection Origin</text>
<rect x="1656.0" y="836.5" width="260.5" height="25.399999999999977" fill="url(#btn)" stroke="#2a2a2a" stroke-width="1" rx="2"/>
<text x="1711" y="855" font-size="15.5" fill="#ececec" textLength="150" lengthAdjust="spacingAndGlyphs">Optimization Settings</text>
<rect x="1418.5" y="867.2" width="77" height="25.799999999999955" fill="url(#btn)" stroke="#2a2a2a" stroke-width="1" rx="2"/>
<text x="1430.7" y="887" font-size="15.5" fill="#ececec" textLength="51.3" lengthAdjust="spacingAndGlyphs">Devices</text>
<rect x="1504.5" y="867.2" width="201.5999999999999" height="25.799999999999955" fill="url(#btn)" stroke="#2a2a2a" stroke-width="1" rx="2"/>
<text x="1509" y="886.4" font-size="15.5" fill="#ececec" textLength="61" lengthAdjust="spacingAndGlyphs">(Choose)</text>
<path d="M1686.6 877.1L1698.6 877.1L1692.6 883.1Z" fill="#bdbdbd"/>
<rect x="1715.5" y="867.2" width="201" height="25.799999999999955" fill="url(#btn)" stroke="#2a2a2a" stroke-width="1" rx="2"/>
<text x="1720" y="886.4" font-size="15.5" fill="#ececec"></text>
<path d="M1897 877.1L1909 877.1L1903 883.1Z" fill="#bdbdbd"/>
<rect x="1719" y="869.5" width="22" height="21" fill="#f4f4f4"/>
<text x="1720" y="884" font-size="11" fill="#111" textLength="20" lengthAdjust="spacingAndGlyphs">grbl</text>
<text x="1744" y="887" font-size="15.5" fill="#ececec" textLength="136.4" lengthAdjust="spacingAndGlyphs">xTool D1 (Imported)</text>
<rect x="1417.5" y="961.5" width="64.5" height="32" fill="#1f1f1f" stroke="#3c3c3c" stroke-width="1" rx="2"/>
<text x="1432" y="985" font-size="15.5" fill="#ececec" textLength="35.3" lengthAdjust="spacingAndGlyphs">Laser</text>
<rect x="1484.5" y="961.5" width="137" height="32" fill="#1f1f1f" stroke="#3c3c3c" stroke-width="1" rx="2"/>
<text x="1498.8" y="985" font-size="15.5" fill="#ececec" textLength="109" lengthAdjust="spacingAndGlyphs">Material Library</text>
<line x1="1406.5" y1="204" x2="1406.5" y2="993" stroke="#161616" stroke-width="1"/>
<rect x="6" y="146.0" width="2" height="2" fill="#6a6a6a"/>
<rect x="9" y="146.0" width="2" height="2" fill="#6a6a6a"/>
<rect x="6" y="149.2" width="2" height="2" fill="#6a6a6a"/>
<rect x="9" y="149.2" width="2" height="2" fill="#6a6a6a"/>
<rect x="6" y="152.4" width="2" height="2" fill="#6a6a6a"/>
<rect x="9" y="152.4" width="2" height="2" fill="#6a6a6a"/>
<rect x="6" y="155.6" width="2" height="2" fill="#6a6a6a"/>
<rect x="9" y="155.6" width="2" height="2" fill="#6a6a6a"/>
<rect x="6" y="158.8" width="2" height="2" fill="#6a6a6a"/>
<rect x="9" y="158.8" width="2" height="2" fill="#6a6a6a"/>
<text x="17" y="141" font-size="16" fill="#f0f0f0" textLength="33" lengthAdjust="spacingAndGlyphs">XPos</text>
<rect x="53" y="122.5" width="89" height="24.5" fill="#262626" stroke="#2f2f2f" stroke-width="1" rx="2"/>
<rect x="126" y="122.5" width="16" height="24.5" fill="#4a4a4a" rx="2"/>
<path d="M129.0 132.3L134.0 126.91L139.0 132.3Z" fill="#8d8d8d"/>
<path d="M129.0 137.2L134.0 142.59L139.0 137.2Z" fill="#8d8d8d"/>
<text x="58" y="141.05" font-size="16" fill="#f0f0f0">8.5990</text>
<text x="145" y="141" font-size="16" fill="#f0f0f0" textLength="12" lengthAdjust="spacingAndGlyphs">in</text>
<text x="17" y="179" font-size="16" fill="#f0f0f0" textLength="33" lengthAdjust="spacingAndGlyphs">YPos</text>
<rect x="53" y="160.5" width="89" height="24.5" fill="#262626" stroke="#2f2f2f" stroke-width="1" rx="2"/>
<rect x="126" y="160.5" width="16" height="24.5" fill="#4a4a4a" rx="2"/>
<path d="M129.0 170.3L134.0 164.91L139.0 170.3Z" fill="#8d8d8d"/>
<path d="M129.0 175.2L134.0 180.59L139.0 175.2Z" fill="#8d8d8d"/>
<text x="58" y="179.05" font-size="16" fill="#f0f0f0">5.6972</text>
<text x="145" y="179" font-size="16" fill="#f0f0f0" textLength="12" lengthAdjust="spacingAndGlyphs">in</text>
<path d="M184 156 V147 Q184 134 195.5 134 Q207 134 207 147 V149 H201.5 V147 Q201.5 140 195.5 140 Q189.5 140 189.5 147 V156Z" fill="#f0f0f0"/>
<rect x="179" y="153" width="32" height="17" fill="#f0f0f0" rx="2"/>
<rect x="180" y="171.5" width="30" height="2.5" fill="#f0f0f0"/>
<text x="223" y="141" font-size="16" fill="#f0f0f0" textLength="41" lengthAdjust="spacingAndGlyphs">Width</text>
<rect x="268" y="122.5" width="91" height="24.5" fill="#262626" stroke="#2f2f2f" stroke-width="1" rx="2"/>
<rect x="343" y="122.5" width="16" height="24.5" fill="#4a4a4a" rx="2"/>
<path d="M346.0 132.3L351.0 126.91L356.0 132.3Z" fill="#8d8d8d"/>
<path d="M346.0 137.2L351.0 142.59L356.0 137.2Z" fill="#8d8d8d"/>
<text x="273" y="141.05" font-size="16" fill="#f0f0f0">22.3171</text>
<text x="362" y="141" font-size="16" fill="#f0f0f0" textLength="12" lengthAdjust="spacingAndGlyphs">in</text>
<text x="219" y="179" font-size="16" fill="#f0f0f0" textLength="45" lengthAdjust="spacingAndGlyphs">Height</text>
<rect x="268" y="160.5" width="91" height="24.5" fill="#262626" stroke="#2f2f2f" stroke-width="1" rx="2"/>
<rect x="343" y="160.5" width="16" height="24.5" fill="#4a4a4a" rx="2"/>
<path d="M346.0 170.3L351.0 164.91L356.0 170.3Z" fill="#8d8d8d"/>
<path d="M346.0 175.2L351.0 180.59L356.0 175.2Z" fill="#8d8d8d"/>
<text x="273" y="179.05" font-size="16" fill="#f0f0f0">6.2034</text>
<text x="362" y="179" font-size="16" fill="#f0f0f0" textLength="12" lengthAdjust="spacingAndGlyphs">in</text>
<rect x="400" y="122.5" width="83" height="24.5" fill="#262626" stroke="#2f2f2f" stroke-width="1" rx="2"/>
<rect x="467" y="122.5" width="16" height="24.5" fill="#4a4a4a" rx="2"/>
<path d="M470.0 132.3L475.0 126.91L480.0 132.3Z" fill="#8d8d8d"/>
<path d="M470.0 137.2L475.0 142.59L480.0 137.2Z" fill="#8d8d8d"/>
<text x="405" y="141.05" font-size="16" fill="#f0f0f0"></text>
<text x="405" y="141" font-size="16" fill="#f0f0f0" textLength="56" lengthAdjust="spacingAndGlyphs">100.000</text>
<rect x="400" y="160.5" width="83" height="24.5" fill="#262626" stroke="#2f2f2f" stroke-width="1" rx="2"/>
<rect x="467" y="160.5" width="16" height="24.5" fill="#4a4a4a" rx="2"/>
<path d="M470.0 170.3L475.0 164.91L480.0 170.3Z" fill="#8d8d8d"/>
<path d="M470.0 175.2L475.0 180.59L480.0 175.2Z" fill="#8d8d8d"/>
<text x="405" y="179.05" font-size="16" fill="#f0f0f0"></text>
<text x="405" y="179" font-size="16" fill="#f0f0f0" textLength="56" lengthAdjust="spacingAndGlyphs">100.000</text>
<text x="485" y="141" font-size="16" fill="#f0f0f0" textLength="13" lengthAdjust="spacingAndGlyphs">%</text>
<text x="485" y="179" font-size="16" fill="#f0f0f0" textLength="13" lengthAdjust="spacingAndGlyphs">%</text>
<rect x="518.5" y="116.5" width="55" height="79" fill="#1c1c1c" stroke="#2a2a2a" stroke-width="1"/>
<circle cx="529" cy="132" r="7" fill="#2a2a2a"/>
<circle cx="529" cy="155" r="7" fill="#2a2a2a"/>
<circle cx="529" cy="177.5" r="7" fill="#2a2a2a"/>
<circle cx="546" cy="132" r="7" fill="#2a2a2a"/>
<circle cx="546" cy="155" r="7" fill="#2a2a2a"/>
<circle cx="546" cy="177.5" r="7" fill="#2a2a2a"/>
<circle cx="562.5" cy="132" r="7" fill="#2a2a2a"/>
<circle cx="562.5" cy="155" r="7" fill="#2a2a2a"/>
<circle cx="562.5" cy="177.5" r="7" fill="#2a2a2a"/>
<circle cx="546" cy="155" r="3.8" fill="#bdbdbd"/>
<text x="580" y="161" font-size="16" fill="#f0f0f0" textLength="44" lengthAdjust="spacingAndGlyphs">Rotate</text>
<rect x="627" y="142" width="80" height="25" fill="#262626" stroke="#2f2f2f" stroke-width="1" rx="2"/>
<rect x="691" y="142" width="16" height="25" fill="#4a4a4a" rx="2"/>
<path d="M694.0 152.0L699.0 146.5L704.0 152.0Z" fill="#8d8d8d"/>
<path d="M694.0 157.0L699.0 162.5L704.0 157.0Z" fill="#8d8d8d"/>
<text x="632" y="160.8" font-size="16" fill="#f0f0f0">0.00</text>
<line x1="714.5" y1="119" x2="714.5" y2="190" stroke="#2a2a2a" stroke-width="1"/>
<rect x="719.5" y="140.5" width="53" height="26.5" fill="url(#btn)" stroke="#2a2a2a" stroke-width="1" rx="2"/>
<text x="746" y="160" font-size="16" fill="#f0f0f0" textLength="12" lengthAdjust="spacingAndGlyphs" text-anchor="middle">in</text>
<rect x="784" y="146.0" width="2" height="2" fill="#6a6a6a"/>
<rect x="787" y="146.0" width="2" height="2" fill="#6a6a6a"/>
<rect x="784" y="149.2" width="2" height="2" fill="#6a6a6a"/>
<rect x="787" y="149.2" width="2" height="2" fill="#6a6a6a"/>
<rect x="784" y="152.4" width="2" height="2" fill="#6a6a6a"/>
<rect x="787" y="152.4" width="2" height="2" fill="#6a6a6a"/>
<rect x="784" y="155.6" width="2" height="2" fill="#6a6a6a"/>
<rect x="787" y="155.6" width="2" height="2" fill="#6a6a6a"/>
<rect x="784" y="158.8" width="2" height="2" fill="#6a6a6a"/>
<rect x="787" y="158.8" width="2" height="2" fill="#6a6a6a"/>
<text x="793" y="133.5" font-size="16" fill="#b4b4b4" textLength="31" lengthAdjust="spacingAndGlyphs">Font</text>
<rect x="826.5" y="113.5" width="270" height="27" fill="#202020" stroke="#2c2c2c" stroke-width="1" rx="2"/>
<rect x="1073" y="114" width="23" height="26" fill="#4a4a4a" rx="2"/>
<path d="M1079 124L1091 124L1085 130Z" fill="#8f8f8f"/>
<text x="830" y="133.5" font-size="16" fill="#b4b4b4" textLength="47" lengthAdjust="spacingAndGlyphs">Impact</text>
<rect x="834" y="153" width="11" height="7" fill="#2e2e2e" rx="1"/>
<rect x="829" y="151" width="9" height="11" fill="#e0e0e0" rx="3"/>
<text x="852" y="163" font-size="16" fill="#b4b4b4" textLength="30" lengthAdjust="spacingAndGlyphs">Bold</text>
<rect x="834" y="181.5" width="11" height="7" fill="#2e2e2e" rx="1"/>
<rect x="829" y="179.5" width="9" height="11" fill="#e0e0e0" rx="3"/>
<text x="852" y="191" font-size="16" fill="#b4b4b4" textLength="31" lengthAdjust="spacingAndGlyphs">Italic</text>
<rect x="965" y="153" width="11" height="7" fill="#2e2e2e" rx="1"/>
<rect x="960" y="151" width="9" height="11" fill="#e0e0e0" rx="3"/>
<text x="984" y="163" font-size="16" fill="#b4b4b4" textLength="80" lengthAdjust="spacingAndGlyphs">Upper Case</text>
<rect x="965" y="181.5" width="11" height="7" fill="#2e2e2e" rx="1"/>
<rect x="960" y="179.5" width="9" height="11" fill="#e0e0e0" rx="3"/>
<text x="984" y="191" font-size="16" fill="#b4b4b4" textLength="47" lengthAdjust="spacingAndGlyphs">Distort</text>
<rect x="1093" y="153" width="10" height="7" fill="#5e5e5e" rx="1"/>
<rect x="1100" y="151" width="9" height="11" fill="#e6e6e6" rx="3"/>
<text x="1115" y="163" font-size="16" fill="#b4b4b4" textLength="51" lengthAdjust="spacingAndGlyphs">Welded</text>
<text x="1100" y="133.5" font-size="16" fill="#b4b4b4" textLength="45" lengthAdjust="spacingAndGlyphs">Height</text>
<rect x="1149" y="114" width="75" height="25" fill="#262626" stroke="#2f2f2f" stroke-width="1" rx="2"/>
<rect x="1208" y="114" width="16" height="25" fill="#4a4a4a" rx="2"/>
<path d="M1211.0 124.0L1216.0 118.5L1221.0 124.0Z" fill="#8d8d8d"/>
<path d="M1211.0 129.0L1216.0 134.5L1221.0 129.0Z" fill="#8d8d8d"/>
<text x="1154" y="132.8" font-size="16" fill="#b4b4b4">0.5701</text>
<text x="1237" y="141" font-size="16" fill="#b4b4b4" textLength="51" lengthAdjust="spacingAndGlyphs">HSpace</text>
<rect x="1291" y="122" width="73" height="25" fill="#262626" stroke="#2f2f2f" stroke-width="1" rx="2"/>
<rect x="1348" y="122" width="16" height="25" fill="#4a4a4a" rx="2"/>
<path d="M1351.0 132.0L1356.0 126.5L1361.0 132.0Z" fill="#8d8d8d"/>
<path d="M1351.0 137.0L1356.0 142.5L1361.0 137.0Z" fill="#8d8d8d"/>
<text x="1296" y="140.8" font-size="16" fill="#b4b4b4">0.00</text>
<text x="1368" y="141" font-size="16" fill="#b4b4b4" textLength="49" lengthAdjust="spacingAndGlyphs">Align X</text>
<rect x="1420.5" y="121.5" width="78" height="25" fill="url(#btn)" stroke="#2a2a2a" stroke-width="1" rx="2"/>
<text x="1425" y="140.3" font-size="16" fill="#9a9a9a">Middle</text>
<path d="M1479 131.0L1491 131.0L1485 137.0Z" fill="#bdbdbd"/>
<text x="1238" y="179" font-size="16" fill="#b4b4b4" textLength="50" lengthAdjust="spacingAndGlyphs">VSpace</text>
<rect x="1291" y="161" width="73" height="25" fill="#262626" stroke="#2f2f2f" stroke-width="1" rx="2"/>
<rect x="1348" y="161" width="16" height="25" fill="#4a4a4a" rx="2"/>
<path d="M1351.0 171.0L1356.0 165.5L1361.0 171.0Z" fill="#8d8d8d"/>
<path d="M1351.0 176.0L1356.0 181.5L1361.0 176.0Z" fill="#8d8d8d"/>
<text x="1296" y="179.8" font-size="16" fill="#b4b4b4">0.00</text>
<text x="1368" y="179" font-size="16" fill="#b4b4b4" textLength="49" lengthAdjust="spacingAndGlyphs">Align Y</text>
<rect x="1420.5" y="160.5" width="78" height="25" fill="url(#btn)" stroke="#2a2a2a" stroke-width="1" rx="2"/>
<text x="1425" y="179.3" font-size="16" fill="#9a9a9a">Middle</text>
<path d="M1479 170.0L1491 170.0L1485 176.0Z" fill="#bdbdbd"/>
<rect x="1503.5" y="121.5" width="150" height="25" fill="url(#btn)" stroke="#2a2a2a" stroke-width="1" rx="2"/>
<text x="1508" y="140.3" font-size="16" fill="#9a9a9a">Normal</text>
<path d="M1634 131.0L1646 131.0L1640 137.0Z" fill="#bdbdbd"/>
<text x="1502" y="179" font-size="16" fill="#b4b4b4" textLength="42" lengthAdjust="spacingAndGlyphs">Offset</text>
<rect x="1547" y="161" width="107" height="25" fill="#262626" stroke="#2f2f2f" stroke-width="1" rx="2"/>
<rect x="1638" y="161" width="16" height="25" fill="#4a4a4a" rx="2"/>
<path d="M1641.0 171.0L1646.0 165.5L1651.0 171.0Z" fill="#8d8d8d"/>
<path d="M1641.0 176.0L1646.0 181.5L1651.0 176.0Z" fill="#8d8d8d"/>
<text x="1552" y="179.8" font-size="16" fill="#b4b4b4">0</text>
<rect x="1665" y="146.0" width="2" height="2" fill="#6a6a6a"/>
<rect x="1668" y="146.0" width="2" height="2" fill="#6a6a6a"/>
<rect x="1665" y="149.2" width="2" height="2" fill="#6a6a6a"/>
<rect x="1668" y="149.2" width="2" height="2" fill="#6a6a6a"/>
<rect x="1665" y="152.4" width="2" height="2" fill="#6a6a6a"/>
<rect x="1668" y="152.4" width="2" height="2" fill="#6a6a6a"/>
<rect x="1665" y="155.6" width="2" height="2" fill="#6a6a6a"/>
<rect x="1668" y="155.6" width="2" height="2" fill="#6a6a6a"/>
<rect x="1665" y="158.8" width="2" height="2" fill="#6a6a6a"/>
<rect x="1668" y="158.8" width="2" height="2" fill="#6a6a6a"/>
<path d="M1682.13 148.00A14.2 14.2 0 0 1 1707.87 148.00" fill="none" stroke="#f0f0f0" stroke-width="4.2"/>
<path d="M1674.8 143.5L1686 149L1677 155.5Z" fill="#f0f0f0"/>
<path d="M1707.87 160.00A14.2 14.2 0 0 1 1682.13 160.00" fill="none" stroke="#f0f0f0" stroke-width="4.2"/>
<path d="M1714.8 164.5L1704 159L1713 152.5Z" fill="#f0f0f0"/>
<rect x="1689.5" y="148.5" width="11" height="11" rx="1.8" fill="#f0f0f0" transform="rotate(-15 1695 154)"/>
<rect x="1726.2" y="133.8" width="17" height="11.4" fill="#f0f0f0"/>
<path d="M1721 146.9H1746.4V166H1718V150Q1718 146.9 1721 146.9Z" fill="#f0f0f0"/>
<rect x="1725.5" y="158.3" width="18.4" height="16" fill="#1e1e1e"/>
<rect x="1726.7" y="159.5" width="16" height="13.6" fill="none" stroke="#f0f0f0" stroke-width="1.6"/>
<line x1="1730" y1="163.5" x2="1740" y2="163.5" stroke="#f0f0f0" stroke-width="1.6"/>
<line x1="1730" y1="167.8" x2="1740" y2="167.8" stroke="#f0f0f0" stroke-width="1.6"/>
<path d="M1746 155Q1747 143 1756.5 136.5Q1757 148 1748.5 157Z" fill="#f0f0f0"/>
<path d="M1745.5 149L1748 160" fill="none" stroke="#1e1e1e" stroke-width="1.2"/>
<ellipse cx="1752.5" cy="164.4" rx="4.3" ry="3.8" fill="none" stroke="#f0f0f0" stroke-width="2.4" transform="rotate(35 1752.5 164.4)"/>
<path d="M1745 156L1749.5 161" fill="none" stroke="#f0f0f0" stroke-width="2"/>
<rect x="1769" y="146.0" width="2" height="2" fill="#6a6a6a"/>
<rect x="1772" y="146.0" width="2" height="2" fill="#6a6a6a"/>
<rect x="1769" y="149.2" width="2" height="2" fill="#6a6a6a"/>
<rect x="1772" y="149.2" width="2" height="2" fill="#6a6a6a"/>
<rect x="1769" y="152.4" width="2" height="2" fill="#6a6a6a"/>
<rect x="1772" y="152.4" width="2" height="2" fill="#6a6a6a"/>
<rect x="1769" y="155.6" width="2" height="2" fill="#6a6a6a"/>
<rect x="1772" y="155.6" width="2" height="2" fill="#6a6a6a"/>
<rect x="1769" y="158.8" width="2" height="2" fill="#6a6a6a"/>
<rect x="1772" y="158.8" width="2" height="2" fill="#6a6a6a"/>
<rect x="1781" y="138" width="8" height="33" fill="none" stroke="#e8e8e8" stroke-width="1.8"/>
<rect x="1782.8" y="139.8" width="4.4" height="29.4" fill="none" stroke="#707070" stroke-width="0.6"/>
<rect x="1852" y="138" width="8" height="33" fill="none" stroke="#e8e8e8" stroke-width="1.8"/>
<rect x="1853.8" y="139.8" width="4.4" height="29.4" fill="none" stroke="#707070" stroke-width="0.6"/>
<rect x="1798" y="147" width="13.5" height="14" fill="none" stroke="#e8e8e8" stroke-width="1.8"/>
<rect x="1828.5" y="147" width="13.5" height="14" fill="none" stroke="#e8e8e8" stroke-width="1.8"/>
<path d="M1791 154H1797M1793 152L1791 154L1793 156M1843 154H1849M1847 152L1849 154L1847 156" fill="none" stroke="#9a9a9a" stroke-width="0.9"/>
<path d="M1813 150q1.5 1 0 2q-1.5 1 0 2q1.5 1 0 2M1815.5 150q1.5 1 0 2q-1.5 1 0 2q1.5 1 0 2M1824 150q1.5 1 0 2q-1.5 1 0 2q1.5 1 0 2M1826.5 150q1.5 1 0 2q-1.5 1 0 2q1.5 1 0 2" fill="none" stroke="#808080" stroke-width="0.7"/>
<path d="M1910 124L1918 134L1910 144" fill="none" stroke="#3a3a3a" stroke-width="3"/>
<rect x="6" y="72.0" width="2" height="2" fill="#6a6a6a"/>
<rect x="9" y="72.0" width="2" height="2" fill="#6a6a6a"/>
<rect x="6" y="75.2" width="2" height="2" fill="#6a6a6a"/>
<rect x="9" y="75.2" width="2" height="2" fill="#6a6a6a"/>
<rect x="6" y="78.4" width="2" height="2" fill="#6a6a6a"/>
<rect x="9" y="78.4" width="2" height="2" fill="#6a6a6a"/>
<rect x="6" y="81.6" width="2" height="2" fill="#6a6a6a"/>
<rect x="9" y="81.6" width="2" height="2" fill="#6a6a6a"/>
<rect x="6" y="84.8" width="2" height="2" fill="#6a6a6a"/>
<rect x="9" y="84.8" width="2" height="2" fill="#6a6a6a"/>
<rect x="6" y="88.0" width="2" height="2" fill="#6a6a6a"/>
<rect x="9" y="88.0" width="2" height="2" fill="#6a6a6a"/>
<path d="M19 61H33.5L45.5 73V99.5H19Q16 99.5 16 96.5V64Q16 61 19 61Z" fill="#f0f0f0"/>
<path d="M19.3 64H32.5V73.8H42.3V96.5H19.3Z" fill="#1e1e1e"/>
<circle cx="47" cy="92.1" r="10.6" fill="#1e1e1e"/><circle cx="47" cy="92.1" r="8.9" fill="#f0f0f0"/>
<rect x="42.5" y="91" width="9" height="2.3" fill="#1e1e1e"/>
<rect x="45.85" y="87.6" width="2.3" height="9" fill="#1e1e1e"/>
<path d="M59 68.8Q59 65.8 62 65.8H73.5L76.5 69.6H89.5Q92.5 69.6 92.5 72.6V77.1H98.6L92 92.5Q91 94.8 88.5 94.8H62Q59 94.8 59 91.8Z" fill="#f0f0f0"/>
<path d="M70 78.5H95.8L89.2 92.1H63.4Z" fill="#1e1e1e"/>
<path d="M67 77.3H92.5" fill="none" stroke="#1e1e1e" stroke-width="1.2"/>
<path d="M105 61H134L142 69V98Q142 101 139 101H105Q102 101 102 98V64Q102 61 105 61Z" fill="#f0f0f0"/>
<rect x="110.3" y="63" width="22" height="12.7" fill="#1e1e1e" rx="1"/>
<rect x="124.8" y="64" width="5.2" height="10.7" fill="#f0f0f0"/>
<rect x="107" y="81.3" width="30" height="17" fill="#1e1e1e" rx="1"/>
<path d="M150 61H168L180 73V98Q180 101 177 101H150Q147 101 147 98V64Q147 61 150 61Z" fill="#f0f0f0"/>
<path d="M150.2 64.2H166.5Q166.5 70 172 71.5H176.8V97.8H150.2Z" fill="#1e1e1e"/>
<path d="M162.3 86.9L173 79V82.5H184V91.3H173V94.8Z" fill="#f0f0f0" stroke="#1e1e1e" stroke-width="1.6"/>
<line x1="190.5" y1="65" x2="190.5" y2="97" stroke="#2a2a2a" stroke-width="1"/>
<g transform="translate(215.8,0) scale(1,1) translate(-215.8,0)">
<circle cx="215.8" cy="80.8" r="19.7" fill="#f0f0f0"/>
<path d="M206.4 75.7Q212 70.5 218.1 70.8Q226 71.5 228.2 80Q229.5 88 223.8 94Q226.5 87 225.2 82Q223.5 77 217.2 76.8Q213.5 76.8 211.1 79.4Z" fill="#1e1e1e"/>
<path d="M203.6 72.9V82.7H213.4Z" fill="#1e1e1e"/>
</g>
<g transform="translate(258.9,0) scale(-1,1) translate(-215.8,0)">
<circle cx="215.8" cy="80.8" r="19.7" fill="#6b6b6b"/>
<path d="M206.4 75.7Q212 70.5 218.1 70.8Q226 71.5 228.2 80Q229.5 88 223.8 94Q226.5 87 225.2 82Q223.5 77 217.2 76.8Q213.5 76.8 211.1 79.4Z" fill="#1e1e1e"/>
<path d="M203.6 72.9V82.7H213.4Z" fill="#1e1e1e"/>
</g>
<line x1="284.5" y1="65" x2="284.5" y2="97" stroke="#2a2a2a" stroke-width="1"/>
<rect x="295" y="65.8" width="30" height="35.2" fill="#f0f0f0" rx="4.5"/>
<rect x="301.6" y="61.6" width="16" height="9.6" fill="#f0f0f0" stroke="#1e1e1e" stroke-width="1.3" rx="2.5"/>
<circle cx="309.6" cy="64.6" r="1.4" fill="#1e1e1e"/>
<path d="M309 89Q306 80 313 74Q314 82 310 89M310 88Q318 84 327 83Q320 91 310 88M303 86.5h5M304 84.5q-3 2 0 4M307 91q-2 4 1 7q3 -3 1 -7" fill="none" stroke="#9a9a9a" stroke-width="0.8"/>
<path d="M336 61H348L353 66V93H336Q333.3 93 333.3 90V64Q333.3 61 336 61Z" fill="#f0f0f0"/>
<rect x="336.3" y="64" width="11" height="26" fill="#1e1e1e"/>
<rect x="338.5" y="73.6" width="8" height="1.8" fill="#f0f0f0"/>
<rect x="338.5" y="77.6" width="8" height="1.8" fill="#f0f0f0"/>
<rect x="338.5" y="81.6" width="8" height="1.8" fill="#f0f0f0"/>
<path d="M351 67.5H363.5L374.5 78.5V99Q374.5 102.5 371 102.5H351Q347.3 102.5 347.3 99V71Q347.3 67.5 351 67.5Z" fill="#1e1e1e"/>
<path d="M351.5 69H362.5L373 79.5V98Q373 101 370 101H351.5Q348.75 101 348.75 98V72Q348.75 69 351.5 69Z" fill="#f0f0f0"/>
<path d="M352 72H361.5V80.5H370V98H352Z" fill="#1e1e1e"/>
<rect x="355" y="81" width="12" height="1.8" fill="#f0f0f0"/>
<rect x="355" y="85.6" width="9" height="1.8" fill="#f0f0f0"/>
<rect x="355" y="90" width="12" height="1.8" fill="#f0f0f0"/>
<rect x="377.8" y="65" width="30" height="36" fill="#f0f0f0" rx="4.5"/>
<rect x="384.8" y="61" width="16.4" height="10.5" fill="#f0f0f0" stroke="#1e1e1e" stroke-width="1.3" rx="2.5"/>
<circle cx="393" cy="64.2" r="1.4" fill="#1e1e1e"/>
<path d="M395 73.5H406L415 82.5V99Q415 101.8 412 101.8H395Q391.8 101.8 391.8 99V76.5Q391.8 73.5 395 73.5Z" fill="#f0f0f0"/>
<path d="M394.5 76H405Q405 81 410 82.5H412.3V99H394.5Z" fill="#1e1e1e"/>
<rect x="396.8" y="81" width="8" height="1.8" fill="#f0f0f0"/>
<rect x="396.8" y="86.5" width="14" height="1.8" fill="#f0f0f0"/>
<rect x="396.8" y="92" width="14" height="1.8" fill="#f0f0f0"/>
<path d="M432.5 67V65Q432.5 61.3 436 61.3H442.5Q446 61.3 446 65V67" fill="none" stroke="#f0f0f0" stroke-width="3"/>
<rect x="422" y="66.8" width="34" height="6.5" fill="#f0f0f0" rx="1.5"/>
<path d="M426.8 73.3V97Q426.8 99.5 429.5 99.5H448.5Q451.3 99.5 451.3 97V73.3" fill="none" stroke="#f0f0f0" stroke-width="3.2"/>
<rect x="431.7" y="76.2" width="2.4" height="18.8" fill="#f0f0f0"/>
<rect x="437.8" y="76.2" width="2.4" height="18.8" fill="#f0f0f0"/>
<rect x="443.9" y="76.2" width="2.8" height="18.8" fill="#f0f0f0"/>
<line x1="465.5" y1="65" x2="465.5" y2="97" stroke="#2a2a2a" stroke-width="1"/>
<path d="M489.8 61.6L496.6 70H492.2V78.6H500.6V74.2L509 81L500.6 87.8V83.4H492.2V92H496.6L489.8 100.4L483 92H487.4V83.4H479V87.8L470.6 81L479 74.2V78.6H487.4V70H483Z" fill="#f0f0f0"/>
<circle cx="537.3" cy="76.6" r="13.2" fill="none" stroke="#f0f0f0" stroke-width="4.6"/>
<line x1="516.1999999999999" y1="98" x2="528.3" y2="86.2" stroke="#f0f0f0" stroke-width="5.2" stroke-linecap="round"/>
<path d="M533 70.5H539L543 74.5V82.5Q543 84 541.5 84H533Q531.5 84 531.5 82.5V72Q531.5 70.5 533 70.5Z" fill="none" stroke="#f0f0f0" stroke-width="1.4"/>
<rect x="533.7" y="76.8" width="6" height="1.3" fill="#f0f0f0"/>
<rect x="533.7" y="79.3" width="8" height="1.3" fill="#f0f0f0"/>
<circle cx="580.5" cy="76.6" r="13.2" fill="none" stroke="#f0f0f0" stroke-width="4.6"/>
<line x1="559.4" y1="98" x2="571.5" y2="86.2" stroke="#f0f0f0" stroke-width="5.2" stroke-linecap="round"/>
<rect x="573.9" y="74.7" width="13.6" height="3.8" fill="#f0f0f0" rx="1"/>
<rect x="578.8" y="69.8" width="3.8" height="13.6" fill="#f0f0f0" rx="1"/>
<circle cx="623.6" cy="76.6" r="13.2" fill="none" stroke="#f0f0f0" stroke-width="4.6"/>
<line x1="602.5" y1="98" x2="614.6" y2="86.2" stroke="#f0f0f0" stroke-width="5.2" stroke-linecap="round"/>
<rect x="616.6" y="74.75" width="13.6" height="4.2" fill="#f0f0f0" rx="2"/>
<path d="M644.3 71.5V66Q644.3 63.5 646.8 63.5H651.7 M657.3 63.5H666.7 M671.4 63.5H677.2Q679.8 63.5 679.8 66V71.5 M679.8 77V86 M679.8 90.2V96Q679.8 98.6 677.2 98.6H671.4 M666.7 98.6H657.3 M651.7 98.6H646.8Q644.3 98.6 644.3 96V90.2 M644.3 86V77" fill="none" stroke="#f0f0f0" stroke-width="4.7"/>
<path d="M688 72.4H694L697 66.8H713L716 72.4H722Q725 72.4 725 75.4V92Q725 95 722 95H688Q685 95 685 92V75.4Q685 72.4 688 72.4Z" fill="#6b6b6b"/>
<circle cx="704.8" cy="82.2" r="7.4" fill="none" stroke="#1e1e1e" stroke-width="2.4"/>
<line x1="731.5" y1="65" x2="731.5" y2="97" stroke="#2a2a2a" stroke-width="1"/>
<rect x="737.2" y="61.2" width="38" height="31.8" fill="#f0f0f0" rx="2.5"/>
<rect x="740" y="64.4" width="32.3" height="22.1" fill="#1e1e1e"/>
<path d="M751 93H761.6V97.3H765Q767.2 97.3 767.2 99.1Q767.2 101 765 101H747Q744.7 101 744.7 99.1Q744.7 97.3 747 97.3H751Z" fill="#f0f0f0"/>
<line x1="781.5" y1="65" x2="781.5" y2="97" stroke="#2a2a2a" stroke-width="1"/>
<path d="M813.84 81.15L817.57 82.44L817.57 87.76L813.84 89.05L813.26 90.47L814.98 94.01L811.21 97.78L807.67 96.06L806.25 96.64L804.96 100.37L799.64 100.37L798.35 96.64L796.93 96.06L793.39 97.78L789.62 94.01L791.34 90.47L790.76 89.05L787.03 87.76L787.03 82.44L790.76 81.15L791.34 79.73L789.62 76.19L793.39 72.42L796.93 74.14L798.35 73.56L799.64 69.83L804.96 69.83L806.25 73.56L807.67 74.14L811.21 72.42L814.98 76.19L813.26 79.73Z" fill="#f0f0f0"/>
<circle cx="802.3" cy="85.1" r="4.8" fill="#1e1e1e"/>
<path d="M824.67 66.69L826.68 67.32L826.68 70.08L824.67 70.71L824.37 71.43L825.35 73.30L823.40 75.25L821.53 74.27L820.81 74.57L820.18 76.58L817.42 76.58L816.79 74.57L816.07 74.27L814.20 75.25L812.25 73.30L813.23 71.43L812.93 70.71L810.92 70.08L810.92 67.32L812.93 66.69L813.23 65.97L812.25 64.10L814.20 62.15L816.07 63.13L816.79 62.83L817.42 60.82L820.18 60.82L820.81 62.83L821.53 63.13L823.40 62.15L825.35 64.10L824.37 65.97Z" fill="#f0f0f0"/>
<circle cx="818.8" cy="68.7" r="2.4" fill="#1e1e1e"/>
<g transform="translate(832,67) rotate(44.7)">
<path d="M-1 -3Q-1 -4 0.5 -4.2L5 -3.8L6.5 -2.4H27V2.4H6.5L5 3.8L0.5 4.2Q-1 4 -1 3Z" fill="#f0f0f0"/>
<path d="M25 -5.6H38.5A5.6 5.6 0 0 1 38.5 5.6H25Q22.5 5.6 22.5 3V-3Q22.5 -5.6 25 -5.6Z" fill="#f0f0f0"/>
</g>
<g transform="translate(836.2,94.4) rotate(-45)">
<path d="M0 -6.2H22L22 6.2H0A6.2 6.2 0 0 1 0 -6.2Z" fill="#f0f0f0" stroke="#1e1e1e" stroke-width="1.6"/>
<circle cx="30.5" cy="0" r="12" fill="#f0f0f0" stroke="#1e1e1e" stroke-width="1.6"/>
<rect x="-0.5" y="-4.6" width="24" height="9.2" fill="#f0f0f0"/>
<circle cx="36" cy="0" r="6.4" fill="#1e1e1e"/>
<rect x="36" y="-6.4" width="10" height="12.8" fill="#1e1e1e"/>
<circle cx="0" cy="0" r="2.1" fill="#1e1e1e"/>
</g>
<rect x="881" y="73.0" width="2" height="2" fill="#6a6a6a"/>
<rect x="884" y="73.0" width="2" height="2" fill="#6a6a6a"/>
<rect x="881" y="76.2" width="2" height="2" fill="#6a6a6a"/>
<rect x="884" y="76.2" width="2" height="2" fill="#6a6a6a"/>
<rect x="881" y="79.4" width="2" height="2" fill="#6a6a6a"/>
<rect x="884" y="79.4" width="2" height="2" fill="#6a6a6a"/>
<rect x="881" y="82.6" width="2" height="2" fill="#6a6a6a"/>
<rect x="884" y="82.6" width="2" height="2" fill="#6a6a6a"/>
<rect x="881" y="85.8" width="2" height="2" fill="#6a6a6a"/>
<rect x="884" y="85.8" width="2" height="2" fill="#6a6a6a"/>
<rect x="881" y="89.0" width="2" height="2" fill="#6a6a6a"/>
<rect x="884" y="89.0" width="2" height="2" fill="#6a6a6a"/>
<g transform="translate(0,0)">
<path d="M898.7 77C894.11 72.8 894.11 63 901 63C907.89 63 907.89 72.8 903.3 77C906.0 78 911 81.4 911 84.4Q911 87.9 901 87.9Q891 87.9 891 84.4C891 81.4 896.0 78 898.7 77Z" fill="#f0f0f0"/>
<path d="M918.7 77C914.11 72.8 914.11 63 921 63C927.89 63 927.89 72.8 923.3 77C926.0 78 931 81.4 931 84.4Q931 87.9 921 87.9Q911 87.9 911 84.4C911 81.4 916.0 78 918.7 77Z" fill="#f0f0f0"/>
<path d="M908 85C901.9 80.32000000000001 901.9 69.4 911 69.4C920.1 69.4 920.1 80.32000000000001 914 85C917.2 86 923.4 92.3 923.4 95.3Q923.4 98.8 911 98.8Q898.6 98.8 898.6 95.3C898.6 92.3 904.8 86 908 85Z" fill="#f0f0f0" stroke="#1e1e1e" stroke-width="2.2"/>
</g>
<g transform="translate(0,0)">
<path d="M949 83.7C942.04 76.8 942.04 60.7 954 60.7C965.96 60.7 965.96 76.8 959 83.7C962.55 84.7 971.1 94.3 971.1 97.3Q971.1 100.8 954 100.8Q936.9 100.8 936.9 97.3C936.9 94.3 945.45 84.7 949 83.7Z" fill="#6b6b6b"/>
</g>
<line x1="979.5" y1="65" x2="979.5" y2="97" stroke="#2a2a2a" stroke-width="1"/>
<g transform="translate(0,0)">
<path d="M992.9 63.5L1015.7 76.2L992.9 76.9Z" fill="none" stroke="#f0f0f0" stroke-width="3.4" stroke-linejoin="round"/>
<path d="M988.9 80.8H1021.3" fill="none" stroke="#f0f0f0" stroke-width="2.3" stroke-dasharray="5 2.2"/>
<path d="M992.9 84.9L1015.7 85.6L992.9 98.8Z" fill="none" stroke="#f0f0f0" stroke-width="3.4" stroke-linejoin="round"/>
</g>
<g transform="translate(0,0)">
<path d="M1030 92.7L1043.2 70.3V92.7Z" fill="none" stroke="#f0f0f0" stroke-width="3.4" stroke-linejoin="round"/>
<path d="M1047.9 64.9V96.8" fill="none" stroke="#f0f0f0" stroke-width="2.3" stroke-dasharray="5 2.2"/>
<path d="M1052.5 70.3L1066 92.7H1052.5Z" fill="none" stroke="#f0f0f0" stroke-width="3.4" stroke-linejoin="round"/>
</g>
<g transform="translate(0,0)">
<path d="M1074.5 71.7L1100 65L1085 77.5Z" fill="none" stroke="#6b6b6b" stroke-width="3.2" stroke-linejoin="round"/>
<path d="M1105.8 71.5L1098.3 97.2L1089 88.3Z" fill="none" stroke="#6b6b6b" stroke-width="3.2" stroke-linejoin="round"/>
<path d="M1074.4 96.3L1106.7 65.4" fill="none" stroke="#6b6b6b" stroke-width="2" stroke-dasharray="5 2"/>
</g>
<line x1="1116.5" y1="65" x2="1116.5" y2="97" stroke="#2a2a2a" stroke-width="1"/>
<circle cx="1141.9" cy="80.8" r="14.6" fill="none" stroke="#f0f0f0" stroke-width="3.6"/>
<circle cx="1141.9" cy="80.8" r="6.1" fill="#f0f0f0"/>
<path d="M1141.9 61.5V69.5M1141.9 92V100M1122.1000000000001 80.8H1130.4M1153.4 80.8H1161.7" fill="none" stroke="#f0f0f0" stroke-width="3.7" stroke-linecap="round"/>
<rect x="1175.2" y="63.5" width="19.6" height="15" fill="#f0f0f0" rx="2.5"/>
<rect x="1180.3" y="69.1" width="9.4" height="4.2" fill="#1e1e1e"/>
<rect x="1170" y="83.7" width="30" height="15" fill="#f0f0f0" rx="2.5"/>
<rect x="1175.2" y="88.8" width="19.6" height="4.2" fill="#1e1e1e"/>
<rect x="1183.6" y="61.2" width="2.8" height="39.3" fill="#f0f0f0" rx="1.4"/>
<rect x="1183.6" y="78.5" width="2.8" height="5.2" fill="#f0f0f0"/>
<rect x="1180.3" y="69.1" width="9.4" height="4.2" fill="#1e1e1e"/>
<rect x="1175.2" y="88.8" width="19.6" height="4.2" fill="#1e1e1e"/>
<path d="M1204 94L1204 101L1197 101Z" fill="#f0f0f0"/>
<rect x="1210.3" y="71" width="15" height="19.7" fill="#f0f0f0" rx="2.5"/>
<rect x="1215.5" y="76.2" width="4.7" height="9.8" fill="#1e1e1e"/>
<rect x="1230.5" y="65.8" width="15" height="30" fill="#f0f0f0" rx="2.5"/>
<rect x="1235.6" y="71" width="4.7" height="19.7" fill="#1e1e1e"/>
<rect x="1208" y="79.4" width="39.8" height="2.8" fill="#f0f0f0" rx="1.4"/>
<rect x="1215.5" y="76.2" width="4.7" height="9.8" fill="#1e1e1e"/>
<rect x="1235.6" y="71" width="4.7" height="19.7" fill="#1e1e1e"/>
<path d="M1248 94L1248 101L1241 101Z" fill="#f0f0f0"/>
<line x1="1254.5" y1="65" x2="1254.5" y2="97" stroke="#2a2a2a" stroke-width="1"/>
<path d="M1259 70.8H1299M1259 91.2H1299" fill="none" stroke="#6b6b6b" stroke-width="2.8" stroke-linecap="round"/>
<rect x="1264.7" y="64" width="29" height="14.5" fill="#6b6b6b" rx="3"/>
<rect x="1269.4" y="68.7" width="19.6" height="4.6" fill="#1e1e1e"/>
<rect x="1269.4" y="84.1" width="19.6" height="14.1" fill="#6b6b6b" rx="3"/>
<rect x="1274" y="88.8" width="10.4" height="4.45" fill="#1e1e1e"/>
<path d="M1299 94L1299 101L1292 101Z" fill="#6b6b6b"/>
<path d="M1312 61.2V100.5M1332.2 61.2V100.5" fill="none" stroke="#6b6b6b" stroke-width="2.8" stroke-linecap="round"/>
<rect x="1304.5" y="71" width="15" height="19.7" fill="#6b6b6b" rx="3"/>
<rect x="1309.2" y="75.7" width="5.6" height="10.3" fill="#1e1e1e"/>
<rect x="1324.7" y="65.8" width="14.5" height="30" fill="#6b6b6b" rx="3"/>
<rect x="1329.4" y="70.5" width="5.6" height="20.6" fill="#1e1e1e"/>
<path d="M1342 94L1342 101L1335 101Z" fill="#6b6b6b"/>
<line x1="1347.5" y1="65" x2="1347.5" y2="97" stroke="#2a2a2a" stroke-width="1"/>
<rect x="1354.8" y="63.1" width="35.7" height="11.1" fill="none" stroke="#f0f0f0" stroke-width="3" rx="2"/>
<path d="M1354 83.2V88.3M1354 96.3V100.5M1391.6 83.2V88.3M1391.6 96.3V100.5" fill="none" stroke="#f0f0f0" stroke-width="2.6" stroke-linecap="round"/>
<path d="M1357.5 93.3L1364 87.9V98.7Z" fill="#f0f0f0"/>
<rect x="1365.4" y="89.3" width="14" height="8" fill="none" stroke="#f0f0f0" stroke-width="2.8"/>
<path d="M1382 88L1388 93.3L1382 98.7Z" fill="#f0f0f0"/>
<path d="M1396 62.5H1401M1408.4 62.5H1413M1396 99.3H1401M1408.4 99.3H1413" fill="none" stroke="#f0f0f0" stroke-width="2.4" stroke-linecap="round"/>
<path d="M1403.75 65.4L1409 71H1398.5Z" fill="#f0f0f0"/>
<rect x="1402.6" y="70" width="2.3" height="6.5" fill="#f0f0f0"/>
<rect x="1397.6" y="77.6" width="12.3" height="7" fill="none" stroke="#f0f0f0" stroke-width="2.8"/>
<path d="M1403.75 96.8L1409 91H1398.5Z" fill="#f0f0f0"/>
<rect x="1402.6" y="85.5" width="2.3" height="6" fill="#f0f0f0"/>
<rect x="1422.1" y="62.7" width="12" height="36.3" fill="none" stroke="#f0f0f0" stroke-width="3" rx="2"/>
<path d="M1459 62V70M1459 74.3V87.4M1459 92V99.6M1440.3 80.8H1448.3M1452 80.8H1465.6M1469.8 80.8H1477.8" fill="none" stroke="#f0f0f0" stroke-width="3.75"/>
<path d="M1479 94L1479 101L1472 101Z" fill="#f0f0f0"/>
<rect x="1490" y="73.0" width="2" height="2" fill="#6a6a6a"/>
<rect x="1493" y="73.0" width="2" height="2" fill="#6a6a6a"/>
<rect x="1490" y="76.2" width="2" height="2" fill="#6a6a6a"/>
<rect x="1493" y="76.2" width="2" height="2" fill="#6a6a6a"/>
<rect x="1490" y="79.4" width="2" height="2" fill="#6a6a6a"/>
<rect x="1493" y="79.4" width="2" height="2" fill="#6a6a6a"/>
<rect x="1490" y="82.6" width="2" height="2" fill="#6a6a6a"/>
<rect x="1493" y="82.6" width="2" height="2" fill="#6a6a6a"/>
<rect x="1490" y="85.8" width="2" height="2" fill="#6a6a6a"/>
<rect x="1493" y="85.8" width="2" height="2" fill="#6a6a6a"/>
<rect x="1490" y="89.0" width="2" height="2" fill="#6a6a6a"/>
<rect x="1493" y="89.0" width="2" height="2" fill="#6a6a6a"/>
<g transform="translate(609,0)">
<path d="M898.7 77C894.11 72.8 894.11 63 901 63C907.89 63 907.89 72.8 903.3 77C906.0 78 911 81.4 911 84.4Q911 87.9 901 87.9Q891 87.9 891 84.4C891 81.4 896.0 78 898.7 77Z" fill="#f0f0f0"/>
<path d="M918.7 77C914.11 72.8 914.11 63 921 63C927.89 63 927.89 72.8 923.3 77C926.0 78 931 81.4 931 84.4Q931 87.9 921 87.9Q911 87.9 911 84.4C911 81.4 916.0 78 918.7 77Z" fill="#f0f0f0"/>
<path d="M908 85C901.9 80.32000000000001 901.9 69.4 911 69.4C920.1 69.4 920.1 80.32000000000001 914 85C917.2 86 923.4 92.3 923.4 95.3Q923.4 98.8 911 98.8Q898.6 98.8 898.6 95.3C898.6 92.3 904.8 86 908 85Z" fill="#f0f0f0" stroke="#1e1e1e" stroke-width="2.2"/>
</g>
<g transform="translate(608,0)">
<path d="M949 83.7C942.04 76.8 942.04 60.7 954 60.7C965.96 60.7 965.96 76.8 959 83.7C962.55 84.7 971.1 94.3 971.1 97.3Q971.1 100.8 954 100.8Q936.9 100.8 936.9 97.3C936.9 94.3 945.45 84.7 949 83.7Z" fill="#6b6b6b"/>
</g>
<line x1="1587.5" y1="65" x2="1587.5" y2="97" stroke="#2a2a2a" stroke-width="1"/>
<g transform="translate(606,0)">
<path d="M992.9 63.5L1015.7 76.2L992.9 76.9Z" fill="none" stroke="#f0f0f0" stroke-width="3.4" stroke-linejoin="round"/>
<path d="M988.9 80.8H1021.3" fill="none" stroke="#f0f0f0" stroke-width="2.3" stroke-dasharray="5 2.2"/>
<path d="M992.9 84.9L1015.7 85.6L992.9 98.8Z" fill="none" stroke="#f0f0f0" stroke-width="3.4" stroke-linejoin="round"/>
</g>
<g transform="translate(605,0)">
<path d="M1030 92.7L1043.2 70.3V92.7Z" fill="none" stroke="#f0f0f0" stroke-width="3.4" stroke-linejoin="round"/>
<path d="M1047.9 64.9V96.8" fill="none" stroke="#f0f0f0" stroke-width="2.3" stroke-dasharray="5 2.2"/>
<path d="M1052.5 70.3L1066 92.7H1052.5Z" fill="none" stroke="#f0f0f0" stroke-width="3.4" stroke-linejoin="round"/>
</g>
<g transform="translate(605,0)">
<path d="M1074.5 71.7L1100 65L1085 77.5Z" fill="none" stroke="#6b6b6b" stroke-width="3.2" stroke-linejoin="round"/>
<path d="M1105.8 71.5L1098.3 97.2L1089 88.3Z" fill="none" stroke="#6b6b6b" stroke-width="3.2" stroke-linejoin="round"/>
<path d="M1074.4 96.3L1106.7 65.4" fill="none" stroke="#6b6b6b" stroke-width="2" stroke-dasharray="5 2"/>
</g>
<line x1="1720.5" y1="65" x2="1720.5" y2="97" stroke="#2a2a2a" stroke-width="1"/>
<circle cx="1744" cy="80.8" r="14.6" fill="none" stroke="#f0f0f0" stroke-width="3.6"/>
<circle cx="1744" cy="80.8" r="6.1" fill="#f0f0f0"/>
<path d="M1744 61.5V69.5M1744 92V100M1724.2 80.8H1732.5M1755.5 80.8H1763.8" fill="none" stroke="#f0f0f0" stroke-width="3.7" stroke-linecap="round"/>
<rect x="1765.8" y="61.2" width="5.2" height="39.6" fill="#f0f0f0" rx="2.6"/>
<rect x="1773.6" y="63.8" width="21.9" height="14.6" fill="#f0f0f0" rx="2.5"/>
<rect x="1778.9" y="68.5" width="11.9" height="4.7" fill="#1e1e1e"/>
<rect x="1773.6" y="81" width="32.3" height="17.7" fill="#f0f0f0" rx="2.5"/>
<rect x="1778.9" y="86.2" width="21.8" height="6.8" fill="#1e1e1e"/>
<rect x="1818.4" y="63.3" width="19.3" height="15.1" fill="#f0f0f0" rx="2.5"/>
<rect x="1823" y="68.5" width="10" height="4.7" fill="#1e1e1e"/>
<rect x="1813.2" y="83.6" width="29.7" height="15.1" fill="#f0f0f0" rx="2.5"/>
<rect x="1818" y="88.2" width="20.3" height="4.7" fill="#1e1e1e"/>
<rect x="1826.6" y="61.2" width="2.8" height="39.6" fill="#f0f0f0" rx="1.4"/>
<rect x="1823" y="68.5" width="10" height="4.7" fill="#1e1e1e"/>
<rect x="1818" y="88.2" width="20.3" height="4.7" fill="#1e1e1e"/>
<rect x="1884.8" y="61.2" width="5.2" height="39.6" fill="#f0f0f0" rx="2.6"/>
<rect x="1860" y="63.8" width="22" height="14.6" fill="#f0f0f0" rx="2.5"/>
<rect x="1865" y="68.5" width="12" height="4.7" fill="#1e1e1e"/>
<rect x="1850" y="81" width="32" height="17.7" fill="#f0f0f0" rx="2.5"/>
<rect x="1855" y="86.2" width="22" height="6.8" fill="#1e1e1e"/>
<path d="M1911 69.5L1919 81.5L1911 93.5" fill="none" stroke="#3a3a3a" stroke-width="4.5"/>
<rect x="35" y="207.5" width="2" height="2" fill="#6a6a6a"/>
<rect x="35" y="210.5" width="2" height="2" fill="#6a6a6a"/>
<rect x="38" y="207.5" width="2" height="2" fill="#6a6a6a"/>
<rect x="38" y="210.5" width="2" height="2" fill="#6a6a6a"/>
<rect x="41" y="207.5" width="2" height="2" fill="#6a6a6a"/>
<rect x="41" y="210.5" width="2" height="2" fill="#6a6a6a"/>
<rect x="44" y="207.5" width="2" height="2" fill="#6a6a6a"/>
<rect x="44" y="210.5" width="2" height="2" fill="#6a6a6a"/>
<rect x="47" y="207.5" width="2" height="2" fill="#6a6a6a"/>
<rect x="47" y="210.5" width="2" height="2" fill="#6a6a6a"/>
<rect x="50" y="207.5" width="2" height="2" fill="#6a6a6a"/>
<rect x="50" y="210.5" width="2" height="2" fill="#6a6a6a"/>
<rect x="21" y="217.5" width="40" height="37" fill="#3c3c3c" stroke="#4e4e4e" stroke-width="1" rx="2.5"/>
<path d="M30.5 219.5L51.5 237.5L43.5 239.5L48 250L42.5 252.5L38 242L30.5 246.5Z" fill="none" stroke="#f0f0f0" stroke-width="3.2" stroke-linejoin="round"/>
<g transform="translate(29.4,295) rotate(-57.3)">
<path d="M10 -4H37Q41.5 -4 41.5 0Q41.5 4 37 4H10Z" fill="#f0f0f0"/>
<path d="M0 0L10.5 -4V4Z" fill="#f0f0f0"/>
<path d="M2.8 0L9 -2.3V2.3Z" fill="#1e1e1e"/>
<line x1="33" y1="-4" x2="33" y2="4" stroke="#1e1e1e" stroke-width="1.4"/>
</g>
<rect x="23.6" y="303.9" width="34.7" height="34.2" fill="none" stroke="#f0f0f0" stroke-width="5.3"/>
<path d="M41.7 340.8L61 321.5V340.8Z" fill="#3cc8c8"/>
<path d="M47 335.5L55.7 326.8V335.5Z" fill="#1f8a8c"/>
<path d="M36.4 349L50.5 353.3L57.5 369L47 383L24.2 383L24.2 356.7Z" fill="none" stroke="#f0f0f0" stroke-width="3.2" stroke-linejoin="round"/>
<circle cx="36.4" cy="349" r="2.6" fill="#f0f0f0"/>
<circle cx="50.5" cy="353.3" r="2.6" fill="#f0f0f0"/>
<circle cx="57.5" cy="369" r="2.6" fill="#f0f0f0"/>
<circle cx="47" cy="383" r="2.6" fill="#f0f0f0"/>
<circle cx="24.2" cy="383" r="2.6" fill="#f0f0f0"/>
<circle cx="24.2" cy="356.7" r="2.6" fill="#f0f0f0"/>
<path d="M37.5 411Q45.97 401.73 46.7 389.2Q38.23 398.47 37.5 411Z" fill="#f0f0f0"/>
<path d="M37.5 411Q49.86 410.61 59.9 403.4Q47.54 403.79 37.5 411Z" fill="#f0f0f0"/>
<ellipse cx="28.3" cy="407.5" rx="5.2" ry="3.4" fill="none" stroke="#f0f0f0" stroke-width="2.4"/>
<ellipse cx="38.5" cy="418.5" rx="3.4" ry="4.8" fill="none" stroke="#f0f0f0" stroke-width="2.4"/>
<circle cx="37.6" cy="410.4" r="0.9" fill="#1e1e1e"/>
<path d="M24.3 432.6H57.9M24.3 440V463.6H37.5M44.6 463.6H57.9V440" fill="none" stroke="#f0f0f0" stroke-width="2.5"/>
<path d="M34.5 475.7H47.5L54.8 502.2H47.6L46.3 497H35.7L34.4 502.2H27.3ZM37.2 491H44.8L41 480.5Z" fill="#f0f0f0"/>
<path d="M41 511.4Q54.8 511.4 54.8 525Q54.8 532 48 541L41 549L34 541Q27.3 532 27.3 525Q27.3 511.4 41 511.4Z" fill="#f0f0f0"/>
<circle cx="40.8" cy="524.6" r="5.1" fill="#1e1e1e"/>
<g transform="translate(41,570.5) rotate(-35)">
<rect x="-22" y="-4.8" width="44" height="9.6" fill="none" stroke="#f0f0f0" stroke-width="2.4"/>
<path d="M-18.0 -3.6V-0.5M-13.5 -3.6V-1.8M-9.0 -3.6V-0.5M-4.5 -3.6V-1.8M0.0 -3.6V-0.5M4.5 -3.6V-1.8M9.0 -3.6V-0.5M13.5 -3.6V-1.8M18.0 -3.6V-0.5" fill="none" stroke="#f0f0f0" stroke-width="1.3"/>
</g>
<rect x="35" y="601" width="2" height="2" fill="#6a6a6a"/>
<rect x="35" y="604" width="2" height="2" fill="#6a6a6a"/>
<rect x="38" y="601" width="2" height="2" fill="#6a6a6a"/>
<rect x="38" y="604" width="2" height="2" fill="#6a6a6a"/>
<rect x="41" y="601" width="2" height="2" fill="#6a6a6a"/>
<rect x="41" y="604" width="2" height="2" fill="#6a6a6a"/>
<rect x="44" y="601" width="2" height="2" fill="#6a6a6a"/>
<rect x="44" y="604" width="2" height="2" fill="#6a6a6a"/>
<rect x="47" y="601" width="2" height="2" fill="#6a6a6a"/>
<rect x="47" y="604" width="2" height="2" fill="#6a6a6a"/>
<rect x="50" y="601" width="2" height="2" fill="#6a6a6a"/>
<rect x="50" y="604" width="2" height="2" fill="#6a6a6a"/>
<ellipse cx="40.8" cy="630.2" rx="15.8" ry="17.3" fill="none" stroke="#f0f0f0" stroke-width="1.3"/>
<ellipse cx="40.8" cy="630.2" rx="12.3" ry="13.8" fill="none" stroke="#f0f0f0" stroke-width="4.2"/>
<ellipse cx="40.8" cy="630.2" rx="8" ry="9.5" fill="none" stroke="#f0f0f0" stroke-width="1.3"/>
<line x1="0" y1="655.5" x2="82" y2="655.5" stroke="#262626" stroke-width="1"/>
<path d="M36 661.5H58V684H53.5V697H33V690H24.3V666H36Z" fill="none" stroke="#6b6b6b" stroke-width="2.4"/>
<path d="M36.5 667V689M43.5 667V688M30 674H52M31 682H51" fill="none" stroke="#6b6b6b" stroke-width="1" stroke-dasharray="1.2 1.6"/>
<rect x="23.6" y="705.5" width="26.1" height="26.1" fill="none" stroke="#f0f0f0" stroke-width="2.6"/>
<path d="M42.3 742.3L61 723.3V742.3Z" fill="#6fa8a8"/>
<rect x="33.1" y="714.1" width="26.7" height="27" fill="none" stroke="#f0f0f0" stroke-width="2.6"/>
<path d="M43.5 741L59.7 724.6V741Z" fill="#6fa8a8"/>
<line x1="0" y1="751.8" x2="82" y2="751.8" stroke="#262626" stroke-width="1"/>
<rect x="21.8" y="757.5" width="9.5" height="9.5" fill="#f0f0f0"/>
<rect x="21.8" y="771.8" width="9.5" height="9.5" fill="#f0f0f0"/>
<rect x="21.8" y="786" width="9.5" height="9.5" fill="#f0f0f0"/>
<rect x="36" y="757.5" width="9.5" height="9.5" fill="#f0f0f0"/>
<rect x="36" y="771.8" width="9.5" height="9.5" fill="#f0f0f0"/>
<rect x="36" y="786" width="9.5" height="9.5" fill="#f0f0f0"/>
<rect x="50.3" y="757.5" width="9.5" height="9.5" fill="#f0f0f0"/>
<rect x="50.3" y="771.8" width="9.5" height="9.5" fill="#f0f0f0"/>
<rect x="50.3" y="786" width="9.5" height="9.5" fill="#f0f0f0"/>
<rect x="36.9" y="799.4" width="8.4" height="7.6" fill="#f0f0f0"/>
<rect x="48.423759005323596" y="804.4762409946763" width="6" height="6" fill="none" stroke="#f0f0f0" stroke-width="1.8" transform="rotate(45 51.423759005323596 807.4762409946763)"/>
<rect x="52.7" y="814.8" width="6" height="6" fill="none" stroke="#f0f0f0" stroke-width="1.8" transform="rotate(0 55.7 817.8)"/>
<rect x="48.423759005323596" y="825.1237590053236" width="6" height="6" fill="none" stroke="#f0f0f0" stroke-width="1.8" transform="rotate(45 51.423759005323596 828.1237590053236)"/>
<rect x="38.1" y="829.4" width="6" height="6" fill="none" stroke="#f0f0f0" stroke-width="1.8" transform="rotate(0 41.1 832.4)"/>
<rect x="27.776240994676407" y="825.1237590053236" width="6" height="6" fill="none" stroke="#f0f0f0" stroke-width="1.8" transform="rotate(45 30.776240994676407 828.1237590053236)"/>
<rect x="23.5" y="814.8" width="6" height="6" fill="none" stroke="#f0f0f0" stroke-width="1.8" transform="rotate(0 26.5 817.8)"/>
<rect x="27.776240994676407" y="804.4762409946763" width="6" height="6" fill="none" stroke="#f0f0f0" stroke-width="1.8" transform="rotate(45 30.776240994676407 807.4762409946763)"/>
<line x1="0" y1="841.9" x2="82" y2="841.9" stroke="#262626" stroke-width="1"/>
<path d="M24.1 856.7L36.1 849.3L49 853.9L57.4 868.7L47.2 882.6L24.1 882.6Z" fill="none" stroke="#6b6b6b" stroke-width="2.6"/>
<circle cx="24.1" cy="856.7" r="2.6" fill="#6b6b6b"/>
<circle cx="49" cy="853.9" r="2.6" fill="#6b6b6b"/>
<circle cx="57.4" cy="868.7" r="2.6" fill="#6b6b6b"/>
<circle cx="47.2" cy="882.6" r="2.6" fill="#6b6b6b"/>
<circle cx="24.1" cy="882.6" r="2.6" fill="#6b6b6b"/>
<path d="M36 850.5L44 849L42.5 846.5L47.5 852.5L41 856L40.5 853Z" fill="#f0f0f0"/>
<path d="M25 922.4V906Q25 891 40 891H57.4" fill="none" stroke="#f0f0f0" stroke-width="2.6"/>
<path d="M57.4 893V922.4H25" fill="none" stroke="#f0f0f0" stroke-width="2" stroke-dasharray="3.6 2.4"/>
<text x="17" y="944.6" font-size="15.5" fill="#f0f0f0" textLength="48.7" lengthAdjust="spacingAndGlyphs">Radius:</text>
<rect x="4.6" y="952" width="73.2" height="25" fill="#262626" stroke="#2f2f2f" stroke-width="1" rx="2"/>
<rect x="61.8" y="952" width="16" height="25" fill="#4a4a4a" rx="2"/>
<path d="M64.8 962.0L69.8 956.5L74.8 962.0Z" fill="#8d8d8d"/>
<path d="M64.8 967.0L69.8 972.5L74.8 967.0Z" fill="#8d8d8d"/>
<text x="9.6" y="970.8" font-size="15.5" fill="#9a9a9a">0.197</text>
<line x1="82" y1="201" x2="82" y2="993" stroke="#181818" stroke-width="1"/>
<line x1="0" y1="996.5" x2="1920" y2="996.5" stroke="#5c5c5c" stroke-width="1"/>
<svg x="0" y="997" width="1920" height="23" overflow="hidden">
<rect x="16" y="5" width="40" height="30" fill="#000000"/>
<text x="36" y="31" font-size="21" fill="#fff" text-anchor="middle">00</text>
<rect x="59" y="5" width="40" height="30" fill="#0000FF"/>
<text x="79" y="31" font-size="21" fill="#fff" text-anchor="middle">01</text>
<rect x="102" y="5" width="40" height="30" fill="#FF0000"/>
<text x="122" y="31" font-size="21" fill="#fff" text-anchor="middle">02</text>
<rect x="145" y="5" width="40" height="30" fill="#00E000"/>
<text x="165" y="31" font-size="21" fill="#000" text-anchor="middle">03</text>
<rect x="188" y="5" width="40" height="30" fill="#D0D000"/>
<text x="208" y="31" font-size="21" fill="#000" text-anchor="middle">04</text>
<rect x="231" y="5" width="40" height="30" fill="#FF8000"/>
<text x="251" y="31" font-size="21" fill="#000" text-anchor="middle">05</text>
<rect x="274" y="5" width="40" height="30" fill="#00E0E0"/>
<text x="294" y="31" font-size="21" fill="#000" text-anchor="middle">06</text>
<rect x="317" y="5" width="40" height="30" fill="#FF00FF"/>
<text x="337" y="31" font-size="21" fill="#fff" text-anchor="middle">07</text>
<rect x="360" y="5" width="40" height="30" fill="#B4B4B4"/>
<text x="380" y="31" font-size="21" fill="#000" text-anchor="middle">08</text>
<rect x="403" y="5" width="40" height="30" fill="#0000A0"/>
<text x="423" y="31" font-size="21" fill="#fff" text-anchor="middle">09</text>
<rect x="446" y="5" width="40" height="30" fill="#A00000"/>
<text x="466" y="31" font-size="21" fill="#fff" text-anchor="middle">10</text>
<rect x="489" y="5" width="40" height="30" fill="#00A000"/>
<text x="509" y="31" font-size="21" fill="#fff" text-anchor="middle">11</text>
<rect x="532" y="5" width="40" height="30" fill="#A0A000"/>
<text x="552" y="31" font-size="21" fill="#fff" text-anchor="middle">12</text>
<rect x="575" y="5" width="40" height="30" fill="#C08000"/>
<text x="595" y="31" font-size="21" fill="#fff" text-anchor="middle">13</text>
<rect x="618" y="5" width="40" height="30" fill="#00A0FF"/>
<text x="638" y="31" font-size="21" fill="#fff" text-anchor="middle">14</text>
<rect x="661" y="5" width="40" height="30" fill="#A000A0"/>
<text x="681" y="31" font-size="21" fill="#fff" text-anchor="middle">15</text>
<rect x="704" y="5" width="40" height="30" fill="#808080"/>
<text x="724" y="31" font-size="21" fill="#fff" text-anchor="middle">16</text>
<rect x="747" y="5" width="40" height="30" fill="#7D87B9"/>
<text x="767" y="31" font-size="21" fill="#000" text-anchor="middle">17</text>
<rect x="790" y="5" width="40" height="30" fill="#BB7784"/>
<text x="810" y="31" font-size="21" fill="#000" text-anchor="middle">18</text>
<rect x="833" y="5" width="40" height="30" fill="#4A6FE3"/>
<text x="853" y="31" font-size="21" fill="#fff" text-anchor="middle">19</text>
<rect x="876" y="5" width="40" height="30" fill="#D33F6A"/>
<text x="896" y="31" font-size="21" fill="#fff" text-anchor="middle">20</text>
<rect x="919" y="5" width="40" height="30" fill="#8CD78C"/>
<text x="939" y="31" font-size="21" fill="#000" text-anchor="middle">21</text>
<rect x="962" y="5" width="40" height="30" fill="#F0B98D"/>
<text x="982" y="31" font-size="21" fill="#000" text-anchor="middle">22</text>
<rect x="1005" y="5" width="40" height="30" fill="#F6C4E1"/>
<text x="1025" y="31" font-size="21" fill="#000" text-anchor="middle">23</text>
<rect x="1048" y="5" width="40" height="30" fill="#FA9ED4"/>
<text x="1068" y="31" font-size="21" fill="#000" text-anchor="middle">24</text>
<rect x="1091" y="5" width="40" height="30" fill="#500A78"/>
<text x="1111" y="31" font-size="21" fill="#fff" text-anchor="middle">25</text>
<rect x="1134" y="5" width="40" height="30" fill="#B45A00"/>
<text x="1154" y="31" font-size="21" fill="#fff" text-anchor="middle">26</text>
<rect x="1177" y="5" width="40" height="30" fill="#004754"/>
<text x="1197" y="31" font-size="21" fill="#fff" text-anchor="middle">27</text>
<rect x="1220" y="5" width="40" height="30" fill="#86FA88"/>
<text x="1240" y="31" font-size="21" fill="#000" text-anchor="middle">28</text>
<rect x="1263" y="5" width="40" height="30" fill="#FFDB66"/>
<text x="1283" y="31" font-size="21" fill="#000" text-anchor="middle">29</text>
<rect x="1314" y="5" width="40" height="30" fill="#F36926"/>
<text x="1334" y="31" font-size="21" fill="#000" text-anchor="middle">T1</text>
<rect x="1357" y="5" width="40" height="30" fill="#0C96D9"/>
<text x="1377" y="31" font-size="21" fill="#fff" text-anchor="middle">T2</text>
<rect x="16" y="4" width="40" height="1.5" fill="#777"/>
<rect x="6" y="17.5" width="2" height="2" fill="#777"/>
<rect x="9.5" y="17.5" width="2" height="2" fill="#777"/>
<rect x="6" y="21" width="2" height="2" fill="#777"/>
<rect x="9.5" y="21" width="2" height="2" fill="#777"/>
</svg>
<defs><linearGradient id="tbg" x1="0" x2="1" y1="0" y2="0"><stop offset="0" stop-color="#dcdfee"/><stop offset="0.1" stop-color="#e3def0"/><stop offset="0.22" stop-color="#e8dfee"/><stop offset="0.27" stop-color="#e9e5e0"/><stop offset="0.33" stop-color="#e9e0ec"/><stop offset="0.5" stop-color="#ebe3ec"/><stop offset="0.6" stop-color="#eee5ea"/><stop offset="0.66" stop-color="#f2e6dc"/><stop offset="0.7" stop-color="#eae6e2"/><stop offset="0.73" stop-color="#dde5ee"/><stop offset="0.79" stop-color="#dfe0e4"/><stop offset="1" stop-color="#dddddd"/></linearGradient><linearGradient id="tbv" x1="0" x2="0" y1="0" y2="1"><stop offset="0" stop-color="#fff" stop-opacity="0.08"/><stop offset="1" stop-color="#e8f0c0" stop-opacity="0.18"/></linearGradient><linearGradient id="win" x1="0" x2="1" y1="0" y2="1"><stop offset="0" stop-color="#52c3f7"/><stop offset="1" stop-color="#1279d4"/></linearGradient><linearGradient id="edge" x1="0" x2="1" y1="0" y2="1"><stop offset="0" stop-color="#35c1f1"/><stop offset="0.6" stop-color="#1b8fd6"/><stop offset="1" stop-color="#54d365"/></linearGradient><linearGradient id="cop" x1="0" x2="1" y1="0" y2="1"><stop offset="0" stop-color="#3fa5ff"/><stop offset="0.5" stop-color="#c26bf0"/><stop offset="1" stop-color="#ff8a3d"/></linearGradient><linearGradient id="nin" x1="0" x2="1" y1="0" y2="1"><stop offset="0" stop-color="#3a3ff0"/><stop offset="0.55" stop-color="#8a2ec0"/><stop offset="1" stop-color="#f0304a"/></linearGradient><linearGradient id="gal" x1="0" x2="0" y1="0" y2="1"><stop offset="0" stop-color="#5ab8f2"/><stop offset="1" stop-color="#1670c8"/></linearGradient></defs>
<rect x="0" y="1020" width="1920" height="60" fill="url(#tbg)"/>
<rect x="0" y="1020" width="1920" height="60" fill="url(#tbv)"/>
<rect x="12.7" y="1036" width="14" height="14" fill="url(#win)" rx="1"/>
<rect x="27.5" y="1036" width="14" height="14" fill="url(#win)" rx="1"/>
<rect x="12.7" y="1050.7" width="14" height="14" fill="url(#win)" rx="1"/>
<rect x="27.5" y="1050.7" width="14" height="14" fill="url(#win)" rx="1"/>
<rect x="60.5" y="1031.5" width="272" height="38" fill="#f7f4f5" stroke="#d6d3d6" stroke-width="1" rx="19"/>
<circle cx="81.5" cy="1048.5" r="6.2" fill="none" stroke="#1c1c1c" stroke-width="2"/>
<line x1="86" y1="1053" x2="91" y2="1058.5" stroke="#1c1c1c" stroke-width="2.2"/>
<text x="105" y="1057.3" font-size="17" fill="#5d5d5d" textLength="51" lengthAdjust="spacingAndGlyphs">Search</text>
<path d="M284 1066L300 1054L328 1058L314 1068Z" fill="#5cc24a"/>
<path d="M292 1064L318 1060" fill="none" stroke="#e8f4d8" stroke-width="1"/>
<ellipse cx="287" cy="1050" rx="10" ry="13" fill="#8a4a24" transform="rotate(-30 287 1050)"/>
<path d="M283 1044L291 1056M284 1049l3 -2M286 1052l3 -2" fill="none" stroke="#f3e6d0" stroke-width="1.2"/>
<path d="M316 1037V1052M326 1037V1052M316 1052H326M321 1052V1062" fill="none" stroke="#e6b820" stroke-width="2.2"/>
<rect x="359" y="1036.5" width="19" height="18" fill="#f4f4f4" stroke="#bdbdbd" stroke-width="1" rx="2"/>
<rect x="349" y="1046" width="19" height="17" fill="#1a1a1a" rx="2"/>
<rect x="359" y="1046" width="9" height="8.5" fill="#9a9a9a"/>
<defs><linearGradient id="edg2" x1="0" x2="1" y1="1" y2="0"><stop offset="0" stop-color="#0c59a8"/><stop offset="0.45" stop-color="#1f8fe0"/><stop offset="0.7" stop-color="#2ab8d8"/><stop offset="1" stop-color="#5ee05a"/></linearGradient><linearGradient id="cop1" x1="0" x2="0" y1="0" y2="1"><stop offset="0" stop-color="#1a7ff0"/><stop offset="0.5" stop-color="#30c070"/><stop offset="1" stop-color="#f0b800"/></linearGradient><linearGradient id="cop2" x1="0" x2="0" y1="0" y2="1"><stop offset="0" stop-color="#3050e0"/><stop offset="0.4" stop-color="#c058e8"/><stop offset="1" stop-color="#ff7040"/></linearGradient></defs>
<circle cx="418" cy="1050.3" r="14.5" fill="url(#edg2)"/>
<path d="M404 1052Q405 1064 418 1064.8Q426 1065 431 1058Q425 1061 420 1059Q412 1056 413 1048Q408 1047 404 1052Z" fill="#0e4f98" opacity="0.8"/>
<circle cx="420" cy="1051" r="3.6" fill="#e8e0ec"/>
<path d="M420 1047.4Q428 1047 433 1051L432.5 1054Q427 1054.5 420 1054.6Z" fill="#e8e0ec"/>
<path d="M463 1041Q465 1036 470 1036H476Q479 1036 478 1040L472 1059Q470.5 1064 466 1064H462Q457.5 1064 459 1059Z" fill="url(#cop1)"/>
<path d="M481 1036H487Q491 1036 490 1040L484 1059Q482.5 1063.5 478 1063.5H471L477 1041Q478.5 1036 481 1036Z" fill="url(#cop2)"/>
<path d="M470.5 1047H481.5L477 1055H467.5Z" fill="#f4d0f0" opacity="0.35"/>
<path d="M515 1041Q515 1038.7 517 1038.7H525L527.5 1041H540Q541.7 1041 541.7 1043V1057.7Q541.7 1059.7 539.7 1059.7H517Q515 1059.7 515 1057.7Z" fill="#1a9e96"/>
<rect x="515" y="1044" width="26.7" height="15.7" fill="#2cc0b0" rx="1.5"/>
<path d="M528.3 1046V1054M524.5 1050.5L528.3 1054.3L532 1050.5M523 1056.5H533.5" fill="none" stroke="#fff" stroke-width="1.6"/>
<text x="554" y="1057" font-size="16.5" fill="#1c1c1c" textLength="75.3" lengthAdjust="spacingAndGlyphs">Downloads</text>
<rect x="525" y="1070" width="8" height="3" fill="#8a8a8a" rx="1.5"/>
<rect x="660" y="1039" width="27" height="25" fill="#2f74c8" rx="2.5"/>
<rect x="657" y="1036" width="27" height="25" fill="url(#gal)" rx="2.5"/>
<path d="M657 1057L667 1047L677 1057L681 1053L684 1057V1061H657Z" fill="#e8f4ff"/>
<circle cx="676" cy="1043" r="3" fill="#fff"/>
<text x="698.3" y="1057" font-size="16.5" fill="#1c1c1c" textLength="73.4" lengthAdjust="spacingAndGlyphs">Gallery - Fil</text>
<rect x="669" y="1070" width="8" height="3" fill="#8a8a8a" rx="1.5"/>
<rect x="797" y="1041" width="29" height="23" fill="#1f5fa8" rx="4"/>
<path d="M805 1041V1038Q805 1035 808 1035H815Q818 1035 818 1038V1041" fill="none" stroke="#38b8f0" stroke-width="2"/>
<rect x="806" y="1046" width="5" height="5" fill="#f25022"/>
<rect x="812" y="1046" width="5" height="5" fill="#7fba00"/>
<rect x="806" y="1052" width="5" height="5" fill="#00a4ef"/>
<rect x="812" y="1052" width="5" height="5" fill="#ffb900"/>
<rect x="851.7" y="1035" width="30" height="29" fill="url(#nin)"/>
<circle cx="866.5" cy="1048" r="7.5" fill="none" stroke="#f0f0ff" stroke-width="2"/>
<path d="M861 1055Q866 1060 872 1055" fill="none" stroke="#f0f0ff" stroke-width="2"/>
<path d="M910 1040L915 1035H929L934 1040L936 1046L930 1060L922 1066L914 1060L908 1046Z" fill="#f4571e"/>
<path d="M916 1046Q922 1043 928 1046L926 1054L922 1058L918 1054Z" fill="#fff"/>
<text x="946.7" y="1057" font-size="16.5" fill="#1c1c1c" textLength="77.6" lengthAdjust="spacingAndGlyphs">Design Size</text>
<rect x="918" y="1070" width="8" height="3" fill="#8a8a8a" rx="1.5"/>
<rect x="1041.7" y="1026.3" width="137.3" height="47.7" fill="#f7f3f3" stroke="#e2dede" stroke-width="1" rx="5"/>
<rect x="1050.7" y="1035" width="30" height="30" fill="#8a1a20" rx="3"/>
<path d="M1055 1060Q1058 1048 1068 1046Q1074 1046 1077 1052Q1072 1050 1069 1053Q1073 1056 1071 1061Q1066 1057 1062 1060Z" fill="#f2d4d4"/>
<path d="M1054 1045Q1064 1036 1078 1042" fill="none" stroke="#f2d4d4" stroke-width="1.6"/>
<text x="1091.7" y="1057" font-size="16.5" fill="#1c1c1c" textLength="75" lengthAdjust="spacingAndGlyphs">Hands with</text>
<rect x="1056.7" y="1071.5" width="19" height="3" fill="#1a6fd6" rx="1.5"/>
<rect x="1196.7" y="1036" width="27.3" height="27.3" fill="url(#gal)" rx="3"/>
<path d="M1196.7 1058L1206 1048L1216 1058L1219 1055L1224 1060V1063.3H1196.7Z" fill="#e8f4ff"/>
<circle cx="1215" cy="1043" r="3" fill="#fff"/>
<text x="1236.7" y="1057" font-size="16.5" fill="#1c1c1c" textLength="80" lengthAdjust="spacingAndGlyphs">Praying Han</text>
<rect x="1207" y="1070" width="8" height="3" fill="#8a8a8a" rx="1.5"/>
<rect x="1342.7" y="1035" width="23.3" height="30" fill="#6a7482" rx="3"/>
<rect x="1345" y="1037.5" width="18.7" height="6" fill="#4cc8f0"/>
<rect x="1345.3" y="1046" width="5" height="4.5" fill="#d8e2ea"/>
<rect x="1351.3" y="1046" width="5" height="4.5" fill="#d8e2ea"/>
<rect x="1357.3" y="1046" width="5" height="4.5" fill="#d8e2ea"/>
<rect x="1345.3" y="1052" width="5" height="4.5" fill="#d8e2ea"/>
<rect x="1351.3" y="1052" width="5" height="4.5" fill="#d8e2ea"/>
<rect x="1357.3" y="1052" width="5" height="4.5" fill="#1a6ac8"/>
<rect x="1345.3" y="1058" width="5" height="4.5" fill="#d8e2ea"/>
<rect x="1351.3" y="1058" width="5" height="4.5" fill="#d8e2ea"/>
<rect x="1357.3" y="1058" width="5" height="4.5" fill="#1a6ac8"/>
<text x="1380" y="1057" font-size="16.5" fill="#1c1c1c" textLength="50" lengthAdjust="spacingAndGlyphs">Calcula</text>
<rect x="1351" y="1070" width="8" height="3" fill="#8a8a8a" rx="1.5"/>
<rect x="1453.5" y="1036" width="20" height="20" fill="#f0f0f0" stroke="#cfcfcf" stroke-width="1" rx="2"/>
<path d="M1456 1038V1044M1456 1038H1462M1466 1038H1470" fill="none" stroke="#e03020" stroke-width="2.4"/>
<path d="M1468 1046L1476 1060M1476 1046L1466 1060" fill="none" stroke="#9aa4b0" stroke-width="1.6"/>
<circle cx="1480.5" cy="1050" r="3.3" fill="none" stroke="#2a8ae8" stroke-width="2"/><circle cx="1469" cy="1061.5" r="3.3" fill="none" stroke="#2a8ae8" stroke-width="2"/>
<text x="1494" y="1057" font-size="16.5" fill="#1c1c1c" textLength="57.7" lengthAdjust="spacingAndGlyphs">Snipping</text>
<rect x="1465" y="1070" width="8" height="3" fill="#8a8a8a" rx="1.5"/>
<path d="M1648.5 1054.5L1655.7 1047L1663 1054.5" fill="none" stroke="#1c1c1c" stroke-width="1.7"/>
<path d="M1687 1057Q1684 1057 1684 1053Q1684 1049 1688 1049Q1690 1043 1696 1044Q1702 1045 1702 1051Q1705 1052 1704 1057Z" fill="none" stroke="#2a2a2a" stroke-width="1.7"/>
<circle cx="1701.5" cy="1056" r="5.6" fill="#1d6fd6" stroke="#e4e4e4" stroke-width="1"/>
<rect x="1700.8" y="1054.5" width="1.5" height="4.5" fill="#fff"/>
<rect x="1700.8" y="1052" width="1.5" height="1.5" fill="#fff"/>
<path d="M1726 1047Q1736 1038 1746 1047M1729.5 1050.5Q1736 1045 1742.5 1050.5M1733 1054Q1736 1051.5 1739 1054" fill="none" stroke="#1c1c1c" stroke-width="1.7"/>
<circle cx="1736" cy="1056.5" r="1.6" fill="#1c1c1c"/>
<path d="M1756 1046H1760L1766 1041V1060L1760 1055H1756Z" fill="none" stroke="#1c1c1c" stroke-width="1.6"/>
<path d="M1769 1046Q1772 1050.5 1769 1055M1772.5 1043Q1777 1050.5 1772.5 1058" fill="none" stroke="#888" stroke-width="1.4"/>
<rect x="1787" y="1045" width="17" height="11" fill="none" stroke="#1c1c1c" stroke-width="1.7" rx="2"/>
<rect x="1789.5" y="1047.5" width="11" height="6" fill="#1c1c1c"/>
<rect x="1804.5" y="1048.5" width="2.2" height="4" fill="#1c1c1c"/>
<path d="M1792 1040L1788 1046H1791L1789 1050" fill="none" stroke="#1c1c1c" stroke-width="1.4"/>
<text x="1896" y="1045.7" font-size="15.5" fill="#1c1c1c" textLength="62.7" lengthAdjust="spacingAndGlyphs" text-anchor="end">12:21 PM</text>
<text x="1896" y="1064.7" font-size="15.5" fill="#1c1c1c" textLength="69.3" lengthAdjust="spacingAndGlyphs" text-anchor="end">8/24/2025</text>
</svg></body></html>
